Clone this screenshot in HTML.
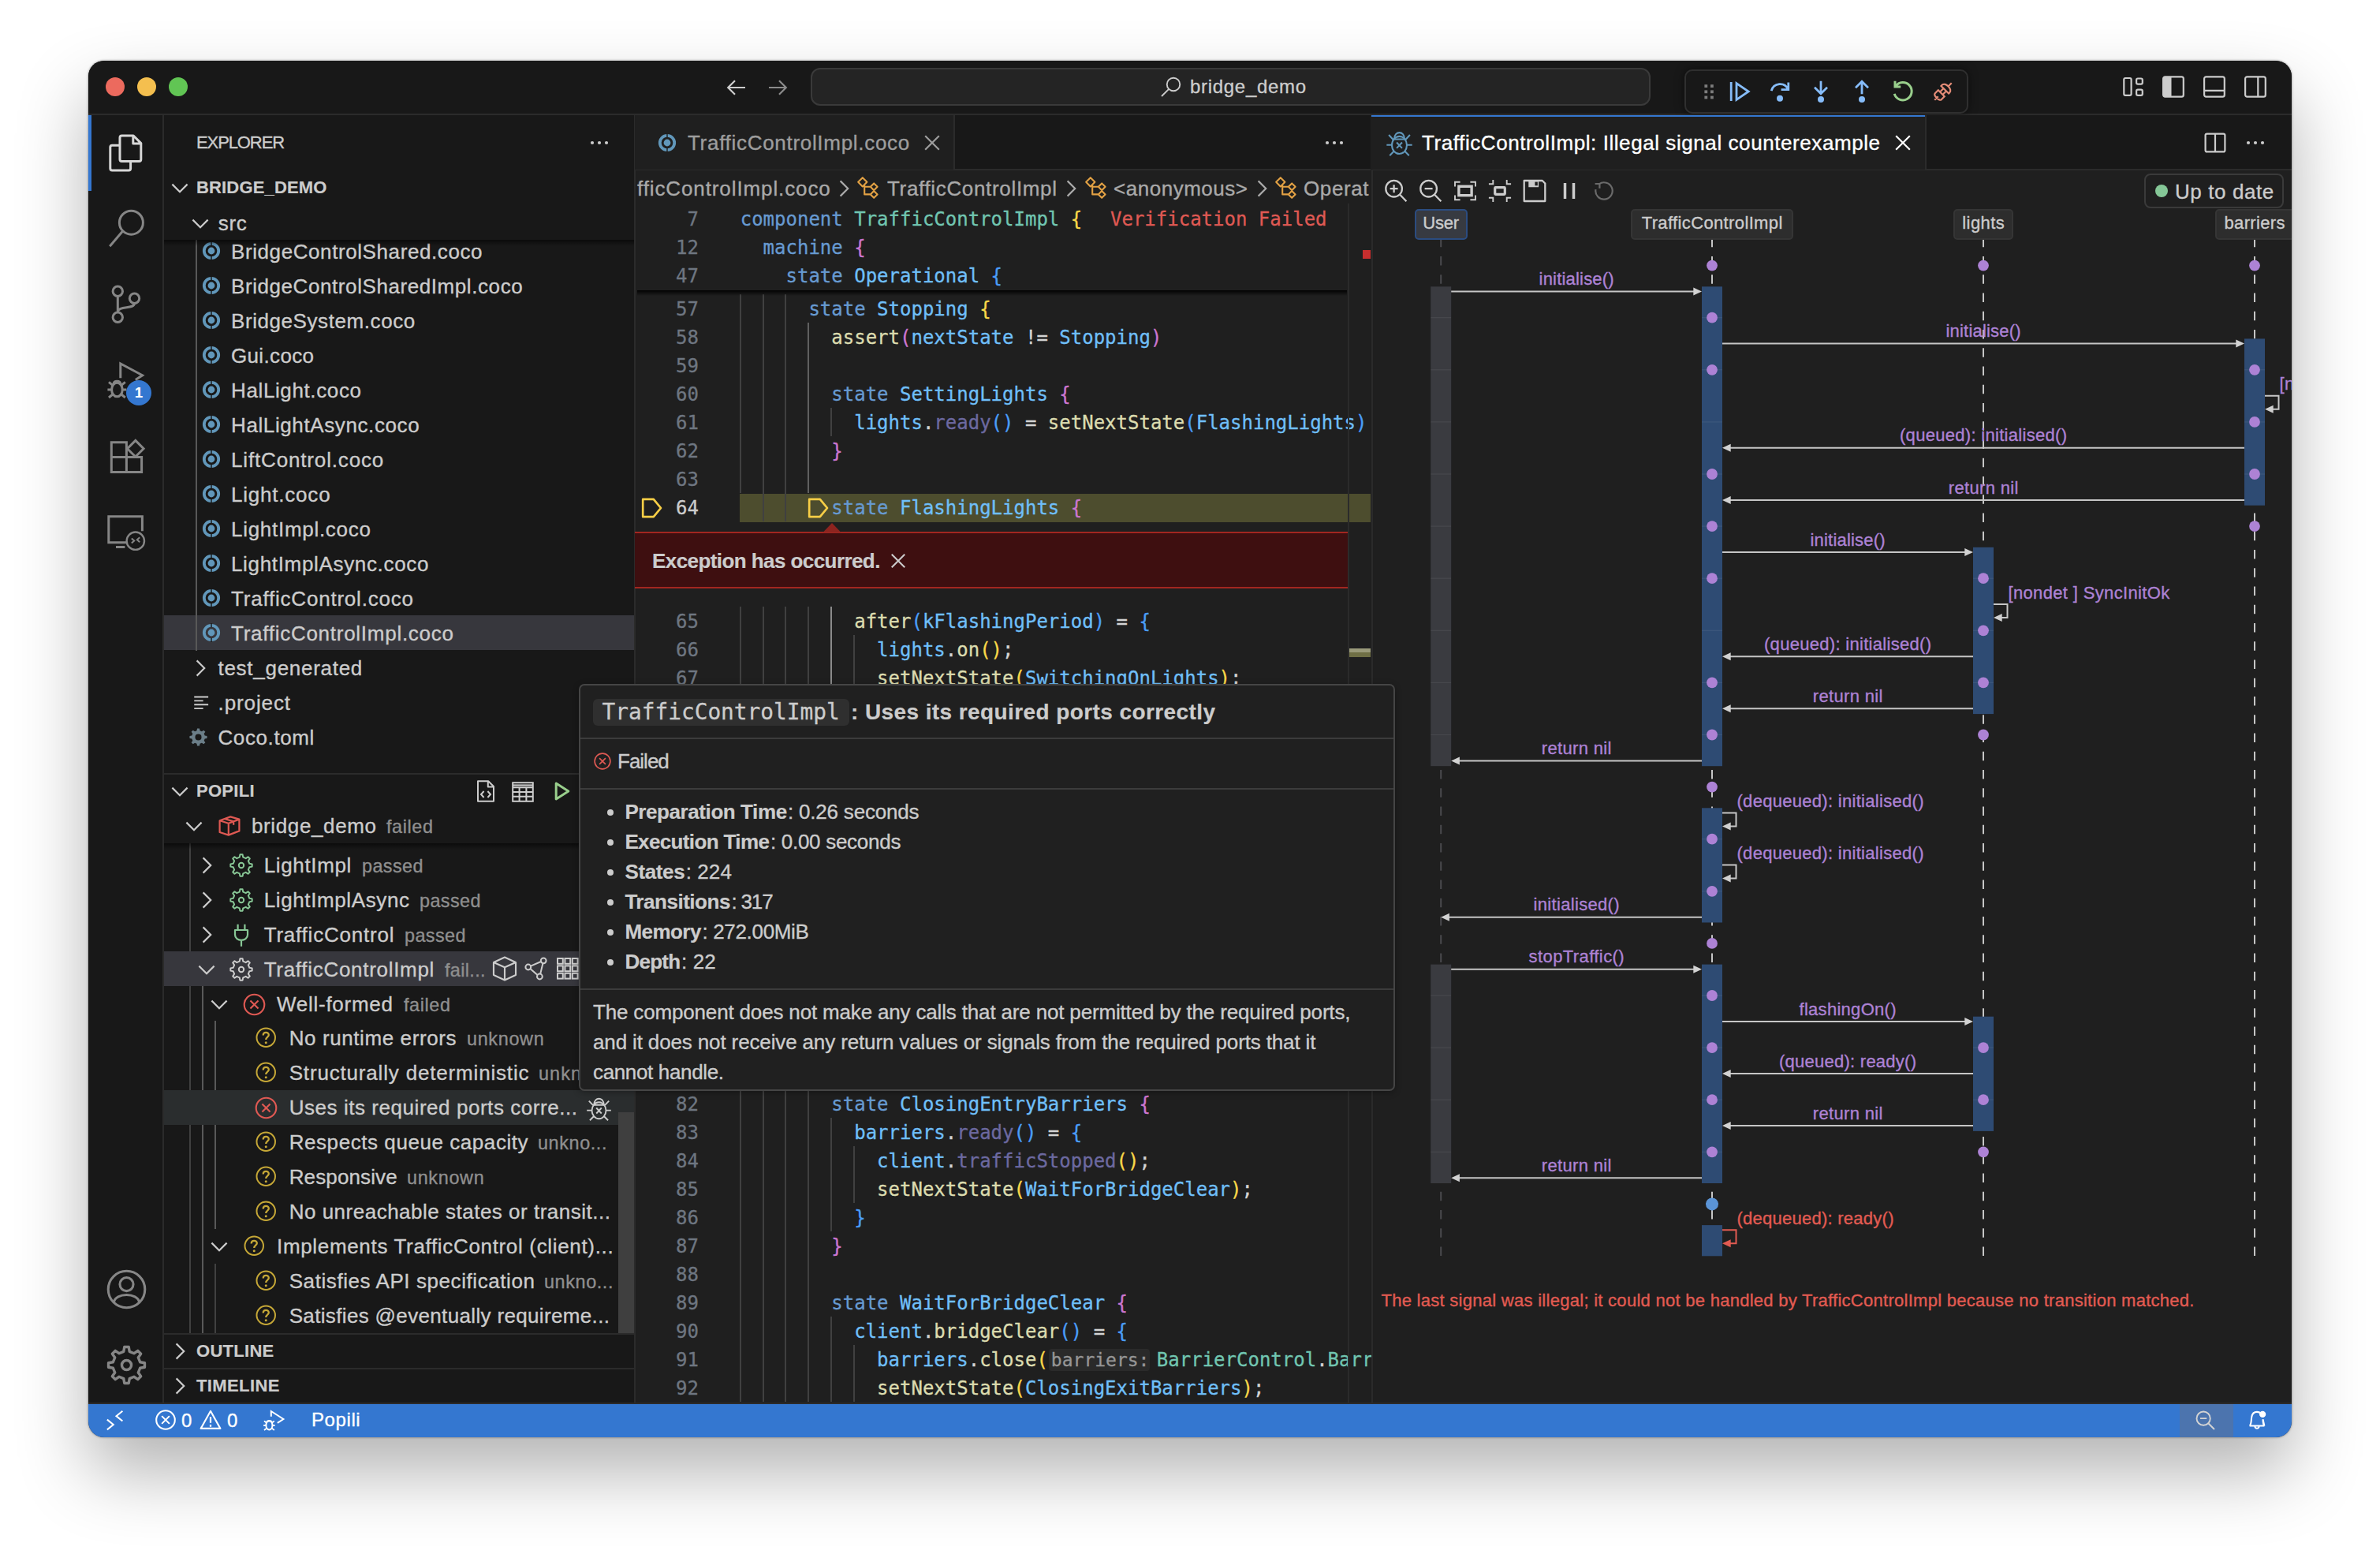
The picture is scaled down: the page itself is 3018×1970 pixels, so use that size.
<!DOCTYPE html><html><head><meta charset="utf-8"><title>bridge_demo</title><style>
html,body{margin:0;padding:0;background:#fff}
body{width:3018px;height:1970px;overflow:hidden;position:relative;font-family:"Liberation Sans",sans-serif}
#win{position:absolute;left:112px;top:77px;width:2794px;height:1745px;border-radius:20px;overflow:hidden;background:#1f1f1f}
#sh{position:absolute;left:112px;top:77px;width:2794px;height:1745px;border-radius:20px;box-shadow:0 44px 90px rgba(0,0,0,.3),0 0 3px rgba(0,0,0,.45)}
#in{position:absolute;left:-112px;top:-77px;width:3018px;height:1970px}
#in div,#in svg{position:absolute;}
#in div.r, #in span{position:static}
.u{white-space:pre;font-family:"Liberation Sans",sans-serif;-webkit-text-stroke:0.35px}
.m{white-space:pre;font-family:"DejaVu Sans Mono","Liberation Mono",monospace;-webkit-text-stroke:0.3px}
svg{overflow:visible}
</style></head><body><div id="sh"></div><div id="win"><div id="in"><div style="left:112px;top:76px;width:2794px;height:70px;background:#181818"></div><div style="left:112px;top:144px;width:2794px;height:2px;background:#2b2b2b"></div><div style="left:134px;top:98px;width:24px;height:24px;background:#ec6a5e;border-radius:50%"></div><div style="left:174px;top:98px;width:24px;height:24px;background:#f4bf4f;border-radius:50%"></div><div style="left:214px;top:98px;width:24px;height:24px;background:#61c554;border-radius:50%"></div><svg style="left:918.0px;top:95.0px;" width="32" height="32" viewBox="0 0 16 16"><path d="M13.5 8 H2.8 M7 3.6 L2.6 8 L7 12.4" fill="none" stroke="#cccccc" stroke-width="1.1"/></svg><svg style="left:970.0px;top:95.0px;" width="32" height="32" viewBox="0 0 16 16"><path d="M2.5 8 H13.2 M9 3.6 L13.4 8 L9 12.4" fill="none" stroke="#8a8a8a" stroke-width="1.1"/></svg><div style="left:1028px;top:86px;width:1065px;height:48px;background:#242424;border:2px solid #3a3a3a;border-radius:12px;box-sizing:border-box"></div><svg style="left:1470.0px;top:95.0px;" width="30" height="30" viewBox="0 0 16 16"><circle cx="9.6" cy="6.4" r="4.4" fill="none" stroke="#cccccc" stroke-width="1.0"/><path d="M6.5 9.5 L1.6 14.4" fill="none" stroke="#cccccc" stroke-width="1.0"/></svg><div class="u" style="left:1509px;top:86px;height:48px;line-height:48px;font-size:24px;color:#cccccc;font-weight:400;letter-spacing:0.7px;">bridge_demo</div><div style="left:2136px;top:88px;width:360px;height:56px;background:#181818;border:2px solid #2f2f2f;border-radius:10px;box-sizing:border-box;box-shadow:0 0 12px rgba(0,0,0,.5)"></div><svg style="left:2689.0px;top:94.0px;" width="32" height="32" viewBox="0 0 16 16"><rect x="2.15" y="2.5" width="4.65" height="10.9" rx="0.9" fill="none" stroke="#cccccc" stroke-width="1.1"/><rect x="10.05" y="2.75" width="3.85" height="3.55" rx="0.9" fill="none" stroke="#cccccc" stroke-width="1.1"/><rect x="10.05" y="9.85" width="3.85" height="3.55" rx="0.9" fill="none" stroke="#cccccc" stroke-width="1.1"/></svg><svg style="left:2740.0px;top:94.0px;" width="32" height="32" viewBox="0 0 16 16"><rect x="1.55" y="1.7" width="12.85" height="12.6" rx="1.2" fill="none" stroke="#cccccc" stroke-width="1.1"/><path d="M2.2 1.9 H6.75 V14.1 H2.2 Q1.7 14.1 1.7 13.4 V2.6 Q1.7 1.9 2.2 1.9 Z" fill="#cccccc"/></svg><svg style="left:2792.0px;top:94.0px;" width="32" height="32" viewBox="0 0 16 16"><rect x="1.55" y="1.7" width="12.85" height="12.6" rx="1.2" fill="none" stroke="#cccccc" stroke-width="1.1"/><path d="M1.8 10.4 H14.2" fill="none" stroke="#cccccc" stroke-width="1.1"/></svg><svg style="left:2844.0px;top:94.0px;" width="32" height="32" viewBox="0 0 16 16"><rect x="1.55" y="1.7" width="12.85" height="12.6" rx="1.2" fill="none" stroke="#cccccc" stroke-width="1.1"/><path d="M9.65 1.9 V14.1" fill="none" stroke="#cccccc" stroke-width="1.1"/></svg><div style="left:112px;top:146px;width:96px;height:1634px;background:#181818"></div><div style="left:206px;top:146px;width:2px;height:1634px;background:#2b2b2b"></div><div style="left:112px;top:146px;width:4px;height:96px;background:#3477d0"></div><svg style="left:136.0px;top:170.0px;" width="48" height="48" viewBox="0 0 24 24"><path d="M9.2 1 H16.6 L21.4 5.8 V16 Q21.4 17.2 20.2 17.2 H9.2 Q8 17.2 8 16 V2.2 Q8 1 9.2 1 Z M16.4 1.2 V6 H21.2" fill="none" stroke="#d7d7d7" stroke-width="1.5" stroke-linejoin="round"/><path d="M7.8 7.1 H3.1 Q1.9 7.1 1.9 8.3 V21.8 Q1.9 23 3.1 23 H13.6 Q14.8 23 14.8 21.8 V17.4" fill="none" stroke="#d7d7d7" stroke-width="1.5" stroke-linejoin="round"/></svg><svg style="left:136.0px;top:266.0px;" width="48" height="48" viewBox="0 0 24 24"><circle cx="15.2" cy="8.1" r="7.5" fill="none" stroke="#868686" stroke-width="1.5"/><path d="M9.9 13.4 L1.6 23.1" fill="none" stroke="#868686" stroke-width="1.5"/></svg><svg style="left:136.0px;top:362.0px;" width="48" height="48" viewBox="0 0 24 24"><circle cx="6.65" cy="3.6" r="3.1" fill="none" stroke="#868686" stroke-width="1.5"/><circle cx="6.65" cy="20.15" r="3.1" fill="none" stroke="#868686" stroke-width="1.5"/><circle cx="17.25" cy="8.15" r="3.1" fill="none" stroke="#868686" stroke-width="1.5"/><path d="M6.65 6.7 V17.05 M17.25 11.25 C17.25 15.2 6.65 12.4 6.65 17" fill="none" stroke="#868686" stroke-width="1.5"/></svg><svg style="left:136.0px;top:458.0px;" width="48" height="48" viewBox="0 0 24 24"><path d="M8.4 10.6 V1.5 L22.3 8.9 L17.9 11.7" fill="none" stroke="#868686" stroke-width="1.5" stroke-linejoin="miter"/><g transform="translate(0 0.8)"><ellipse cx="6.2" cy="17.2" rx="3.4" ry="4.4" fill="none" stroke="#868686" stroke-width="1.5"/><path d="M3.9 13.9 C4.2 11.2 8.2 11.2 8.5 13.9 M2.8 17.2 H0.2 M9.6 17.2 H12.2 M3.4 14.4 L1 12.4 M9 14.4 L11.4 12.4 M3.4 20.2 L1 22.2 M9 20.2 L11.4 22.2" fill="none" stroke="#868686" stroke-width="1.5"/></g></svg><div style="left:160px;top:482px;width:32px;height:32px;background:#3477d0;border-radius:50%"></div><div class="u" style="left:160px;top:480px;height:36px;line-height:36px;font-size:18px;color:#fff;font-weight:700;letter-spacing:0.0px;-webkit-text-stroke:0.2px;width:32px;text-align:center">1</div><svg style="left:136.0px;top:554.0px;" width="48" height="48" viewBox="0 0 24 24"><path d="M2.65 3.35 H12.2 V12.8 H21.8 V22.2 H2.65 Z M2.65 12.8 H12.2 V22.2" fill="none" stroke="#868686" stroke-width="1.5"/><path d="M17.9 2.2 L23.05 7.35 L17.9 12.5 L12.75 7.35 Z" fill="none" stroke="#868686" stroke-width="1.5"/></svg><svg style="left:136.0px;top:652.0px;" width="48" height="48" viewBox="0 0 24 24"><path d="M12 17.9 H0.9 V1.4 H22.2 V10.6 M5.5 20.75 H11.2" fill="none" stroke="#868686" stroke-width="1.5"/><circle cx="17.9" cy="16.85" r="5.6" fill="none" stroke="#868686" stroke-width="1.2"/><path d="M15.4 15.2 L17.1 16.7 L15.4 18.2 M20.6 14.6 L18.9 16.1 L20.6 17.6" fill="none" stroke="#868686" stroke-width="1.0"/></svg><svg style="left:131.5px;top:1605.5px;" width="57" height="57" viewBox="0 0 24 24"><circle cx="12" cy="12" r="9.8" fill="none" stroke="#868686" stroke-width="1.3"/><circle cx="12" cy="9.3" r="3.6" fill="none" stroke="#868686" stroke-width="1.3"/><path d="M5.2 18.9 C6 13.6 18 13.6 18.8 18.9" fill="none" stroke="#868686" stroke-width="1.3"/></svg><svg style="left:132.5px;top:1702.5px;" width="55" height="55" viewBox="0 0 24 24"><path d="M10.38 4.49 L10.82 1.99 L13.18 1.99 L13.62 4.49 L16.17 5.55 L18.24 4.08 L19.92 5.76 L18.45 7.83 L19.51 10.38 L22.01 10.82 L22.01 13.18 L19.51 13.62 L18.45 16.17 L19.92 18.24 L18.24 19.92 L16.17 18.45 L13.62 19.51 L13.18 22.01 L10.82 22.01 L10.38 19.51 L7.83 18.45 L5.76 19.92 L4.08 18.24 L5.55 16.17 L4.49 13.62 L1.99 13.18 L1.99 10.82 L4.49 10.38 L5.55 7.83 L4.08 5.76 L5.76 4.08 L7.83 5.55 Z" fill="none" stroke="#868686" stroke-width="1.5" stroke-linejoin="round"/><circle cx="12.0" cy="12.0" r="2.64" fill="none" stroke="#868686" stroke-width="1.5"/></svg><div style="left:112px;top:1779.7px;width:2794px;height:43px;background:#3477d0"></div><svg style="left:131.0px;top:1785.0px;" width="30" height="30" viewBox="0 0 16 16"><path d="M2.6 7.8 L6.8 11.2 L2.6 14.6 M13 2 L8.8 5.4 L13 8.8" fill="none" stroke="#ffffff" stroke-width="1.1"/></svg><svg style="left:195.0px;top:1785.0px;" width="30" height="30" viewBox="0 0 16 16"><circle cx="8" cy="8" r="6.3" fill="none" stroke="#ffffff" stroke-width="1.1"/><path d="M5.4 5.4 L10.6 10.6 M10.6 5.4 L5.4 10.6" fill="none" stroke="#ffffff" stroke-width="1.1"/></svg><div class="u" style="left:230px;top:1777px;height:48px;line-height:48px;font-size:24px;color:#ffffff;font-weight:400;letter-spacing:0px;">0</div><svg style="left:252.0px;top:1785.0px;" width="30" height="30" viewBox="0 0 16 16"><path d="M8 2 L14.6 13.8 H1.4 Z" fill="none" stroke="#ffffff" stroke-width="1.1" stroke-linejoin="round"/><path d="M8 6 V10 M8 11.2 V12.6" fill="none" stroke="#ffffff" stroke-width="1.2"/></svg><div class="u" style="left:288px;top:1777px;height:48px;line-height:48px;font-size:24px;color:#ffffff;font-weight:400;letter-spacing:0.0px;">0</div><svg style="left:331.0px;top:1785.0px;" width="32" height="32" viewBox="0 0 16 16"><path d="M6.4 5.4 V2 L14.2 7 L10.4 9.4" fill="none" stroke="#ffffff" stroke-width="1.0"/><ellipse cx="5.2" cy="11" rx="2" ry="2.7" fill="none" stroke="#ffffff" stroke-width="1.0"/><path d="M3.6 9 C3.8 7.6 6.6 7.6 6.8 9 M3.2 11 H1.6 M7.2 11 H8.8 M3.5 9.4 L2 8.2 M6.9 9.4 L8.4 8.2 M3.5 12.8 L2 14 M6.9 12.8 L8.4 14" fill="none" stroke="#ffffff" stroke-width="0.9"/></svg><div class="u" style="left:395px;top:1776px;height:48px;line-height:48px;font-size:24px;color:#ffffff;font-weight:400;letter-spacing:0.6px;">Popili</div><div style="left:2764px;top:1780px;width:68px;height:42px;background:#4c74ae"></div><svg style="left:2781.0px;top:1785.0px;" width="30" height="30" viewBox="0 0 16 16"><circle cx="7" cy="7" r="4.6" fill="none" stroke="#d4d4d4" stroke-width="1.0"/><path d="M10.4 10.4 L14.4 14.4 M4.8 7 H9.2" fill="none" stroke="#d4d4d4" stroke-width="1.0"/></svg><svg style="left:2847.0px;top:1785.0px;" width="30" height="30" viewBox="0 0 16 16"><path d="M3 12 C4.4 10.6 4 8 4.4 6 C4.8 3.6 6.4 2.6 8 2.6 C9.2 2.6 10 3 10.6 3.6 M12 7.6 C12 9.6 12 10.8 13 12 Z M3 12 H13 M6.6 12.4 C6.8 14.2 9.2 14.2 9.4 12.4" fill="none" stroke="#ffffff" stroke-width="1.1"/><circle cx="11.8" cy="4.2" r="2.2" fill="#ffffff"/></svg><svg style="left:2151.0px;top:100.0px;" width="32" height="32" viewBox="0 0 16 16"><rect x="5.2" y="3.6" width="1.9" height="1.9" fill="#7c7c7c"/><rect x="5.2" y="7.2" width="1.9" height="1.9" fill="#7c7c7c"/><rect x="5.2" y="10.8" width="1.9" height="1.9" fill="#7c7c7c"/><rect x="9.0" y="3.6" width="1.9" height="1.9" fill="#7c7c7c"/><rect x="9.0" y="7.2" width="1.9" height="1.9" fill="#7c7c7c"/><rect x="9.0" y="10.8" width="1.9" height="1.9" fill="#7c7c7c"/></svg><svg style="left:2190.0px;top:100.0px;" width="32" height="32" viewBox="0 0 16 16"><path d="M2.6 2 V14" fill="none" stroke="#86bcf9" stroke-width="1.4"/><path d="M6 2.8 L13.6 8 L6 13.2 Z" fill="none" stroke="#86bcf9" stroke-width="1.4" stroke-linejoin="miter"/></svg><svg style="left:2241.0px;top:100.0px;" width="32" height="32" viewBox="0 0 16 16"><path d="M2.6 7.6 C4 2.4 11 1.8 13.2 6.6 M13.4 2.2 V6.8 H8.8" fill="none" stroke="#86bcf9" stroke-width="1.4"/><circle cx="8" cy="12.4" r="2" fill="#86bcf9"/></svg><svg style="left:2293.0px;top:100.0px;" width="32" height="32" viewBox="0 0 16 16"><path d="M8 1.4 V9 M4 5.4 L8 9.4 L12 5.4" fill="none" stroke="#86bcf9" stroke-width="1.4"/><circle cx="8" cy="13" r="2" fill="#86bcf9"/></svg><svg style="left:2345.0px;top:100.0px;" width="32" height="32" viewBox="0 0 16 16"><path d="M8 9.6 V2 M4 5.6 L8 1.6 L12 5.6" fill="none" stroke="#86bcf9" stroke-width="1.4"/><circle cx="8" cy="13" r="2" fill="#86bcf9"/></svg><svg style="left:2397.0px;top:100.0px;" width="32" height="32" viewBox="0 0 16 16"><path d="M3.4 4.6 A5.6 5.6 0 1 1 2.6 9.4 M3 1.4 V5 H6.6" fill="none" stroke="#99cf8c" stroke-width="1.5"/></svg><svg style="left:2448.0px;top:100.0px;" width="32" height="32" viewBox="0 0 16 16"><g transform="rotate(-45 8 8)"><path d="M0.4 8 H3.6 M12.4 8 H15.6 M3.6 5.2 H6.4 V10.8 H3.6 C1.8 10.8 1.8 5.2 3.6 5.2 Z M9.6 4.6 H10.4 C13.4 4.6 13.4 11.4 10.4 11.4 H9.6 Z M6.4 6.8 H9.6 M6.4 9.2 H9.6" fill="none" stroke="#e58c77" stroke-width="1.1"/></g></svg><div style="left:208px;top:146px;width:597px;height:1634px;background:#181818"></div><div style="left:804px;top:146px;width:2px;height:1634px;background:#2b2b2b"></div><div style="left:208px;top:780px;width:596px;height:44px;background:#37373d"></div><div style="left:248px;top:304px;width:2px;height:521px;background:#585858"></div><svg style="left:252.0px;top:301.5px;" width="32" height="32" viewBox="0 0 16 16"><circle cx="8" cy="8" r="4.6" fill="none" stroke="#6197ba" stroke-width="1.9"/><circle cx="8" cy="8" r="2.2" fill="#6197ba"/><path d="M8 2 V4.6 M8 11.4 V14" stroke="#181818" stroke-width="0.7"/></svg><div class="u" style="left:293px;top:293px;height:52px;line-height:52px;font-size:26px;color:#cccccc;font-weight:400;letter-spacing:0.588px;">BridgeControlShared.coco</div><svg style="left:252.0px;top:345.5px;" width="32" height="32" viewBox="0 0 16 16"><circle cx="8" cy="8" r="4.6" fill="none" stroke="#6197ba" stroke-width="1.9"/><circle cx="8" cy="8" r="2.2" fill="#6197ba"/><path d="M8 2 V4.6 M8 11.4 V14" stroke="#181818" stroke-width="0.7"/></svg><div class="u" style="left:293px;top:337px;height:52px;line-height:52px;font-size:26px;color:#cccccc;font-weight:400;letter-spacing:0.578px;">BridgeControlSharedImpl.coco</div><svg style="left:252.0px;top:389.5px;" width="32" height="32" viewBox="0 0 16 16"><circle cx="8" cy="8" r="4.6" fill="none" stroke="#6197ba" stroke-width="1.9"/><circle cx="8" cy="8" r="2.2" fill="#6197ba"/><path d="M8 2 V4.6 M8 11.4 V14" stroke="#181818" stroke-width="0.7"/></svg><div class="u" style="left:293px;top:381px;height:52px;line-height:52px;font-size:26px;color:#cccccc;font-weight:400;letter-spacing:0.576px;">BridgeSystem.coco</div><svg style="left:252.0px;top:433.5px;" width="32" height="32" viewBox="0 0 16 16"><circle cx="8" cy="8" r="4.6" fill="none" stroke="#6197ba" stroke-width="1.9"/><circle cx="8" cy="8" r="2.2" fill="#6197ba"/><path d="M8 2 V4.6 M8 11.4 V14" stroke="#181818" stroke-width="0.7"/></svg><div class="u" style="left:293px;top:425px;height:52px;line-height:52px;font-size:26px;color:#cccccc;font-weight:400;letter-spacing:0.342px;">Gui.coco</div><svg style="left:252.0px;top:477.5px;" width="32" height="32" viewBox="0 0 16 16"><circle cx="8" cy="8" r="4.6" fill="none" stroke="#6197ba" stroke-width="1.9"/><circle cx="8" cy="8" r="2.2" fill="#6197ba"/><path d="M8 2 V4.6 M8 11.4 V14" stroke="#181818" stroke-width="0.7"/></svg><div class="u" style="left:293px;top:469px;height:52px;line-height:52px;font-size:26px;color:#cccccc;font-weight:400;letter-spacing:0.622px;">HalLight.coco</div><svg style="left:252.0px;top:521.5px;" width="32" height="32" viewBox="0 0 16 16"><circle cx="8" cy="8" r="4.6" fill="none" stroke="#6197ba" stroke-width="1.9"/><circle cx="8" cy="8" r="2.2" fill="#6197ba"/><path d="M8 2 V4.6 M8 11.4 V14" stroke="#181818" stroke-width="0.7"/></svg><div class="u" style="left:293px;top:513px;height:52px;line-height:52px;font-size:26px;color:#cccccc;font-weight:400;letter-spacing:0.609px;">HalLightAsync.coco</div><svg style="left:252.0px;top:565.5px;" width="32" height="32" viewBox="0 0 16 16"><circle cx="8" cy="8" r="4.6" fill="none" stroke="#6197ba" stroke-width="1.9"/><circle cx="8" cy="8" r="2.2" fill="#6197ba"/><path d="M8 2 V4.6 M8 11.4 V14" stroke="#181818" stroke-width="0.7"/></svg><div class="u" style="left:293px;top:557px;height:52px;line-height:52px;font-size:26px;color:#cccccc;font-weight:400;letter-spacing:0.844px;">LiftControl.coco</div><svg style="left:252.0px;top:609.5px;" width="32" height="32" viewBox="0 0 16 16"><circle cx="8" cy="8" r="4.6" fill="none" stroke="#6197ba" stroke-width="1.9"/><circle cx="8" cy="8" r="2.2" fill="#6197ba"/><path d="M8 2 V4.6 M8 11.4 V14" stroke="#181818" stroke-width="0.7"/></svg><div class="u" style="left:293px;top:601px;height:52px;line-height:52px;font-size:26px;color:#cccccc;font-weight:400;letter-spacing:0.786px;">Light.coco</div><svg style="left:252.0px;top:653.5px;" width="32" height="32" viewBox="0 0 16 16"><circle cx="8" cy="8" r="4.6" fill="none" stroke="#6197ba" stroke-width="1.9"/><circle cx="8" cy="8" r="2.2" fill="#6197ba"/><path d="M8 2 V4.6 M8 11.4 V14" stroke="#181818" stroke-width="0.7"/></svg><div class="u" style="left:293px;top:645px;height:52px;line-height:52px;font-size:26px;color:#cccccc;font-weight:400;letter-spacing:0.712px;">LightImpl.coco</div><svg style="left:252.0px;top:697.5px;" width="32" height="32" viewBox="0 0 16 16"><circle cx="8" cy="8" r="4.6" fill="none" stroke="#6197ba" stroke-width="1.9"/><circle cx="8" cy="8" r="2.2" fill="#6197ba"/><path d="M8 2 V4.6 M8 11.4 V14" stroke="#181818" stroke-width="0.7"/></svg><div class="u" style="left:293px;top:689px;height:52px;line-height:52px;font-size:26px;color:#cccccc;font-weight:400;letter-spacing:0.664px;">LightImplAsync.coco</div><svg style="left:252.0px;top:741.5px;" width="32" height="32" viewBox="0 0 16 16"><circle cx="8" cy="8" r="4.6" fill="none" stroke="#6197ba" stroke-width="1.9"/><circle cx="8" cy="8" r="2.2" fill="#6197ba"/><path d="M8 2 V4.6 M8 11.4 V14" stroke="#181818" stroke-width="0.7"/></svg><div class="u" style="left:293px;top:733px;height:52px;line-height:52px;font-size:26px;color:#cccccc;font-weight:400;letter-spacing:0.792px;">TrafficControl.coco</div><svg style="left:252.0px;top:785.5px;" width="32" height="32" viewBox="0 0 16 16"><circle cx="8" cy="8" r="4.6" fill="none" stroke="#6197ba" stroke-width="1.9"/><circle cx="8" cy="8" r="2.2" fill="#6197ba"/><path d="M8 2 V4.6 M8 11.4 V14" stroke="#181818" stroke-width="0.7"/></svg><div class="u" style="left:293px;top:777px;height:52px;line-height:52px;font-size:26px;color:#cccccc;font-weight:400;letter-spacing:0.733px;">TrafficControlImpl.coco</div><svg style="left:238.0px;top:831.0px;" width="32" height="32" viewBox="0 0 16 16"><path d="M5.8 3.2 L10.6 8 L5.8 12.8" fill="none" stroke="#cccccc" stroke-width="1.1"/></svg><div class="u" style="left:276.5px;top:821px;height:52px;line-height:52px;font-size:26px;color:#cccccc;font-weight:400;letter-spacing:0.717px;">test_generated</div><svg style="left:242.5px;top:877.0px;" width="26" height="26" viewBox="0 0 16 16"><path d="M2 4 H13 M2 7 H9 M2 10 H13 M2 13 H9" fill="none" stroke="#cccccc" stroke-width="1.2"/></svg><div class="u" style="left:276.5px;top:865px;height:52px;line-height:52px;font-size:26px;color:#cccccc;font-weight:400;letter-spacing:0.905px;">.project</div><svg style="left:238.0px;top:920.5px;" width="27" height="27" viewBox="0 0 16 16"><path d="M6.83 3.14 L7.12 1.46 L8.88 1.46 L9.17 3.14 L10.61 3.74 L12.00 2.75 L13.25 4.00 L12.26 5.39 L12.86 6.83 L14.54 7.12 L14.54 8.88 L12.86 9.17 L12.26 10.61 L13.25 12.00 L12.00 13.25 L10.61 12.26 L9.17 12.86 L8.88 14.54 L7.12 14.54 L6.83 12.86 L5.39 12.26 L4.00 13.25 L2.75 12.00 L3.74 10.61 L3.14 9.17 L1.46 8.88 L1.46 7.12 L3.14 6.83 L3.74 5.39 L2.75 4.00 L4.00 2.75 L5.39 3.74 Z M8 5.6 A2.4 2.4 0 1 0 8 10.4 A2.4 2.4 0 1 0 8 5.6 Z" fill="#6b7e88" fill-rule="evenodd"/></svg><div class="u" style="left:276.5px;top:909px;height:52px;line-height:52px;font-size:26px;color:#cccccc;font-weight:400;letter-spacing:0.595px;">Coco.toml</div><div style="left:208px;top:146px;width:596px;height:158px;background:#181818"></div><div style="left:208px;top:304px;width:596px;height:8px;background:linear-gradient(rgba(0,0,0,.55),rgba(0,0,0,0))"></div><div class="u" style="left:249px;top:159px;height:44px;line-height:44px;font-size:22px;color:#cccccc;font-weight:400;letter-spacing:-1.1px;">EXPLORER</div><svg style="left:744.0px;top:165.0px;" width="32" height="32" viewBox="0 0 16 16"><circle cx="3.5" cy="8" r="1.05" fill="#cccccc"/><circle cx="8" cy="8" r="1.05" fill="#cccccc"/><circle cx="12.5" cy="8" r="1.05" fill="#cccccc"/></svg><svg style="left:212.0px;top:222.0px;" width="32" height="32" viewBox="0 0 16 16"><path d="M3.2 5.8 L8 10.6 L12.8 5.8" fill="none" stroke="#cccccc" stroke-width="1.1"/></svg><div class="u" style="left:249px;top:216px;height:44px;line-height:44px;font-size:22px;color:#cccccc;font-weight:700;letter-spacing:0.16px;-webkit-text-stroke:0.2px;">BRIDGE_DEMO</div><svg style="left:238.0px;top:267.0px;" width="32" height="32" viewBox="0 0 16 16"><path d="M3.2 5.8 L8 10.6 L12.8 5.8" fill="none" stroke="#cccccc" stroke-width="1.1"/></svg><div class="u" style="left:276.8px;top:257px;height:52px;line-height:52px;font-size:26px;color:#cccccc;font-weight:400;letter-spacing:0.67px;">src</div><div style="left:208px;top:980px;width:596px;height:2px;background:#2b2b2b"></div><svg style="left:212.0px;top:987.0px;" width="32" height="32" viewBox="0 0 16 16"><path d="M3.2 5.8 L8 10.6 L12.8 5.8" fill="none" stroke="#cccccc" stroke-width="1.1"/></svg><div class="u" style="left:249px;top:981px;height:44px;line-height:44px;font-size:22px;color:#cccccc;font-weight:700;letter-spacing:0.28px;-webkit-text-stroke:0.2px;">POPILI</div><svg style="left:600.0px;top:987.0px;" width="32" height="32" viewBox="0 0 16 16"><path d="M3 1.6 H9.6 L13 5 V14.4 H3 Z M9.4 1.8 V5.2 H12.8" fill="none" stroke="#cccccc" stroke-width="1" stroke-linejoin="round"/><path d="M6.8 8 L5 10 L6.8 12 M9.2 8 L11 10 L9.2 12" fill="none" stroke="#cccccc" stroke-width="1"/></svg><svg style="left:647.0px;top:987.0px;" width="32" height="32" viewBox="0 0 16 16"><rect x="1.6" y="2.6" width="12.8" height="11.8" fill="none" stroke="#cccccc" stroke-width="1"/><path d="M1.6 5.6 H14.4 M1.6 8.5 H14.4 M1.6 11.4 H14.4 M5.8 5.6 V14.4 M10.2 5.6 V14.4" fill="none" stroke="#cccccc" stroke-width="1"/><path d="M1.6 4.2 H14.4" fill="none" stroke="#cccccc" stroke-width="1"/></svg><svg style="left:696.0px;top:987.0px;" width="32" height="32" viewBox="0 0 16 16"><path d="M4.6 3 L12.4 8 L4.6 13 Z" fill="none" stroke="#99cf8c" stroke-width="1.5" stroke-linejoin="round"/></svg><div style="left:240px;top:1069px;width:2px;height:622px;background:#404040"></div><div style="left:256px;top:1250px;width:2px;height:441px;background:#585858"></div><div style="left:272px;top:1294px;width:2px;height:264px;background:#585858"></div><div style="left:272px;top:1602px;width:2px;height:89px;background:#404040"></div><div style="left:208px;top:1206px;width:596px;height:44px;background:#37373d"></div><div style="left:208px;top:1382px;width:596px;height:44px;background:#2a2d2e"></div><svg style="left:246.0px;top:1081.0px;" width="32" height="32" viewBox="0 0 16 16"><path d="M5.8 3.2 L10.6 8 L5.8 12.8" fill="none" stroke="#cccccc" stroke-width="1.1"/></svg><svg style="left:290.0px;top:1081.0px;" width="32" height="32" viewBox="0 0 16 16"><path d="M6.89 2.84 L7.19 1.17 L8.81 1.17 L9.11 2.84 L10.86 3.56 L12.26 2.60 L13.40 3.74 L12.44 5.14 L13.16 6.89 L14.83 7.19 L14.83 8.81 L13.16 9.11 L12.44 10.86 L13.40 12.26 L12.26 13.40 L10.86 12.44 L9.11 13.16 L8.81 14.83 L7.19 14.83 L6.89 13.16 L5.14 12.44 L3.74 13.40 L2.60 12.26 L3.56 10.86 L2.84 9.11 L1.17 8.81 L1.17 7.19 L2.84 6.89 L3.56 5.14 L2.60 3.74 L3.74 2.60 L5.14 3.56 Z" fill="none" stroke="#88c796" stroke-width="1.0" stroke-linejoin="round"/><circle cx="8.0" cy="8.0" r="1.6" fill="none" stroke="#88c796" stroke-width="1.0"/></svg><div class="u" style="left:334.7px;top:1071px;height:52px;line-height:52px;font-size:26px;color:#cccccc;font-weight:400;letter-spacing:0.65px;">LightImpl</div><div class="u" style="left:459px;top:1074.6px;height:46.8px;line-height:46.8px;font-size:23.4px;color:#8f8f8f;font-weight:400;letter-spacing:0.408px;">passed</div><svg style="left:246.0px;top:1125.0px;" width="32" height="32" viewBox="0 0 16 16"><path d="M5.8 3.2 L10.6 8 L5.8 12.8" fill="none" stroke="#cccccc" stroke-width="1.1"/></svg><svg style="left:290.0px;top:1125.0px;" width="32" height="32" viewBox="0 0 16 16"><path d="M6.89 2.84 L7.19 1.17 L8.81 1.17 L9.11 2.84 L10.86 3.56 L12.26 2.60 L13.40 3.74 L12.44 5.14 L13.16 6.89 L14.83 7.19 L14.83 8.81 L13.16 9.11 L12.44 10.86 L13.40 12.26 L12.26 13.40 L10.86 12.44 L9.11 13.16 L8.81 14.83 L7.19 14.83 L6.89 13.16 L5.14 12.44 L3.74 13.40 L2.60 12.26 L3.56 10.86 L2.84 9.11 L1.17 8.81 L1.17 7.19 L2.84 6.89 L3.56 5.14 L2.60 3.74 L3.74 2.60 L5.14 3.56 Z" fill="none" stroke="#88c796" stroke-width="1.0" stroke-linejoin="round"/><circle cx="8.0" cy="8.0" r="1.6" fill="none" stroke="#88c796" stroke-width="1.0"/></svg><div class="u" style="left:334.7px;top:1115px;height:52px;line-height:52px;font-size:26px;color:#cccccc;font-weight:400;letter-spacing:0.615px;">LightImplAsync</div><div class="u" style="left:532px;top:1118.6px;height:46.8px;line-height:46.8px;font-size:23.4px;color:#8f8f8f;font-weight:400;letter-spacing:0.408px;">passed</div><svg style="left:246.0px;top:1169.0px;" width="32" height="32" viewBox="0 0 16 16"><path d="M5.8 3.2 L10.6 8 L5.8 12.8" fill="none" stroke="#cccccc" stroke-width="1.1"/></svg><svg style="left:290.0px;top:1169.0px;" width="32" height="32" viewBox="0 0 16 16"><path d="M5.8 1.4 V5 M10.2 1.4 V5 M4 5 H12 V8 C12 12.6 4 12.6 4 8 Z M8 11.6 V15.4" fill="none" stroke="#88c796" stroke-width="1.1" stroke-linejoin="round"/></svg><div class="u" style="left:334.7px;top:1159px;height:52px;line-height:52px;font-size:26px;color:#cccccc;font-weight:400;letter-spacing:0.784px;">TrafficControl</div><div class="u" style="left:513px;top:1162.6px;height:46.8px;line-height:46.8px;font-size:23.4px;color:#8f8f8f;font-weight:400;letter-spacing:0.408px;">passed</div><svg style="left:246.0px;top:1213.0px;" width="32" height="32" viewBox="0 0 16 16"><path d="M3.2 5.8 L8 10.6 L12.8 5.8" fill="none" stroke="#cccccc" stroke-width="1.1"/></svg><svg style="left:290.0px;top:1213.0px;" width="32" height="32" viewBox="0 0 16 16"><path d="M6.89 2.84 L7.19 1.17 L8.81 1.17 L9.11 2.84 L10.86 3.56 L12.26 2.60 L13.40 3.74 L12.44 5.14 L13.16 6.89 L14.83 7.19 L14.83 8.81 L13.16 9.11 L12.44 10.86 L13.40 12.26 L12.26 13.40 L10.86 12.44 L9.11 13.16 L8.81 14.83 L7.19 14.83 L6.89 13.16 L5.14 12.44 L3.74 13.40 L2.60 12.26 L3.56 10.86 L2.84 9.11 L1.17 8.81 L1.17 7.19 L2.84 6.89 L3.56 5.14 L2.60 3.74 L3.74 2.60 L5.14 3.56 Z" fill="none" stroke="#cccccc" stroke-width="1.0" stroke-linejoin="round"/><circle cx="8.0" cy="8.0" r="1.6" fill="none" stroke="#cccccc" stroke-width="1.0"/></svg><div class="u" style="left:334.7px;top:1203px;height:52px;line-height:52px;font-size:26px;color:#cccccc;font-weight:400;letter-spacing:0.704px;">TrafficControlImpl</div><div class="u" style="left:564px;top:1206.6px;height:46.8px;line-height:46.8px;font-size:23.4px;color:#8f8f8f;font-weight:400;letter-spacing:0.347px;">fail...</div><svg style="left:623.0px;top:1211.0px;" width="34" height="34" viewBox="0 0 16 16"><path d="M8 1.2 L14.6 4.2 V11.8 L8 14.8 L1.4 11.8 V4.2 Z M1.4 4.2 L8 7.2 L14.6 4.2 M8 7.2 V14.8" fill="none" stroke="#cccccc" stroke-width="1" stroke-linejoin="round"/></svg><svg style="left:664.0px;top:1212.0px;" width="32" height="32" viewBox="0 0 16 16"><circle cx="12.6" cy="2.9" r="1.7" fill="none" stroke="#cccccc" stroke-width="1"/><circle cx="2.9" cy="7" r="1.7" fill="none" stroke="#cccccc" stroke-width="1"/><circle cx="10.2" cy="13" r="1.7" fill="none" stroke="#cccccc" stroke-width="1"/><path d="M4.5 6.3 L11 3.5 M4.3 8.1 L8.8 12 M12.2 4.6 L10.6 11.3" fill="none" stroke="#cccccc" stroke-width="1"/></svg><svg style="left:704.0px;top:1212.0px;" width="32" height="32" viewBox="0 0 16 16"><rect x="1.5" y="1.5" width="3.4" height="3.4" fill="none" stroke="#cccccc" stroke-width="1"/><rect x="1.5" y="6.2" width="3.4" height="3.4" fill="none" stroke="#cccccc" stroke-width="1"/><rect x="1.5" y="10.9" width="3.4" height="3.4" fill="none" stroke="#cccccc" stroke-width="1"/><rect x="6.2" y="1.5" width="3.4" height="3.4" fill="none" stroke="#cccccc" stroke-width="1"/><rect x="6.2" y="6.2" width="3.4" height="3.4" fill="none" stroke="#cccccc" stroke-width="1"/><rect x="6.2" y="10.9" width="3.4" height="3.4" fill="none" stroke="#cccccc" stroke-width="1"/><rect x="10.9" y="1.5" width="3.4" height="3.4" fill="none" stroke="#cccccc" stroke-width="1"/><rect x="10.9" y="6.2" width="3.4" height="3.4" fill="none" stroke="#cccccc" stroke-width="1"/><rect x="10.9" y="10.9" width="3.4" height="3.4" fill="none" stroke="#cccccc" stroke-width="1"/></svg><svg style="left:262.0px;top:1257.0px;" width="32" height="32" viewBox="0 0 16 16"><path d="M3.2 5.8 L8 10.6 L12.8 5.8" fill="none" stroke="#cccccc" stroke-width="1.1"/></svg><svg style="left:306.5px;top:1257.5px;" width="31" height="31" viewBox="0 0 16 16"><circle cx="8" cy="8" r="6.6" fill="none" stroke="#df5953" stroke-width="1.1"/><path d="M5.4 5.4 L10.6 10.6 M10.6 5.4 L5.4 10.6" fill="none" stroke="#df5953" stroke-width="1.1"/></svg><div class="u" style="left:351px;top:1247px;height:52px;line-height:52px;font-size:26px;color:#cccccc;font-weight:400;letter-spacing:0.733px;">Well-formed</div><div class="u" style="left:512px;top:1250.6px;height:46.8px;line-height:46.8px;font-size:23.4px;color:#8f8f8f;font-weight:400;letter-spacing:0.612px;">failed</div><svg style="left:322.75px;top:1300.75px;" width="28.5" height="28.5" viewBox="0 0 16 16"><circle cx="8" cy="8" r="6.6" fill="none" stroke="#c6a837" stroke-width="1.1"/><path d="M6 6.4 C6 3.8 10 3.8 10 6.2 C10 7.8 8 7.6 8 9.6" fill="none" stroke="#c6a837" stroke-width="1.3"/><circle cx="8" cy="11.6" r="0.85" fill="#c6a837"/></svg><div class="u" style="left:366.7px;top:1290px;height:52px;line-height:52px;font-size:26px;color:#cccccc;font-weight:400;letter-spacing:0.595px;">No runtime errors</div><div class="u" style="left:592px;top:1293.6px;height:46.8px;line-height:46.8px;font-size:23.4px;color:#8f8f8f;font-weight:400;letter-spacing:0.671px;">unknown</div><svg style="left:322.75px;top:1344.75px;" width="28.5" height="28.5" viewBox="0 0 16 16"><circle cx="8" cy="8" r="6.6" fill="none" stroke="#c6a837" stroke-width="1.1"/><path d="M6 6.4 C6 3.8 10 3.8 10 6.2 C10 7.8 8 7.6 8 9.6" fill="none" stroke="#c6a837" stroke-width="1.3"/><circle cx="8" cy="11.6" r="0.85" fill="#c6a837"/></svg><div class="u" style="left:366.7px;top:1334px;height:52px;line-height:52px;font-size:26px;color:#cccccc;font-weight:400;letter-spacing:0.824px;">Structurally deterministic</div><div class="u" style="left:683px;top:1337.6px;height:46.8px;line-height:46.8px;font-size:23.4px;color:#8f8f8f;font-weight:400;letter-spacing:1.061px;">unkno</div><svg style="left:321.5px;top:1388.5px;" width="31" height="31" viewBox="0 0 16 16"><circle cx="8" cy="8" r="6.6" fill="none" stroke="#df5953" stroke-width="1.1"/><path d="M5.4 5.4 L10.6 10.6 M10.6 5.4 L5.4 10.6" fill="none" stroke="#df5953" stroke-width="1.1"/></svg><div class="u" style="left:366.7px;top:1378px;height:52px;line-height:52px;font-size:26px;color:#cccccc;font-weight:400;letter-spacing:0.55px;">Uses its required ports corre...</div><svg style="left:741.5px;top:1386.5px;" width="35" height="35" viewBox="0 0 16 16"><ellipse cx="8" cy="9.5" rx="4.1" ry="4.8" fill="none" stroke="#cccccc" stroke-width="0.85"/><path d="M5.2 6.1 C5.2 1.5 10.8 1.5 10.8 6.1 M4.6 6.3 H11.4 M3.9 9.4 H1 M12.1 9.4 H15 M4.6 6.5 L2.2 3.9 M11.4 6.5 L13.8 3.9 M5.1 12.8 L2.7 15.2 M10.9 12.8 L13.3 15.2 M6.5 8 L9.5 11.2 M9.5 8 L6.5 11.2" fill="none" stroke="#cccccc" stroke-width="0.85"/></svg><svg style="left:322.75px;top:1432.75px;" width="28.5" height="28.5" viewBox="0 0 16 16"><circle cx="8" cy="8" r="6.6" fill="none" stroke="#c6a837" stroke-width="1.1"/><path d="M6 6.4 C6 3.8 10 3.8 10 6.2 C10 7.8 8 7.6 8 9.6" fill="none" stroke="#c6a837" stroke-width="1.3"/><circle cx="8" cy="11.6" r="0.85" fill="#c6a837"/></svg><div class="u" style="left:366.7px;top:1422px;height:52px;line-height:52px;font-size:26px;color:#cccccc;font-weight:400;letter-spacing:0.563px;">Respects queue capacity</div><div class="u" style="left:682px;top:1425.6px;height:46.8px;line-height:46.8px;font-size:23.4px;color:#8f8f8f;font-weight:400;letter-spacing:0.606px;">unkno...</div><svg style="left:322.75px;top:1476.75px;" width="28.5" height="28.5" viewBox="0 0 16 16"><circle cx="8" cy="8" r="6.6" fill="none" stroke="#c6a837" stroke-width="1.1"/><path d="M6 6.4 C6 3.8 10 3.8 10 6.2 C10 7.8 8 7.6 8 9.6" fill="none" stroke="#c6a837" stroke-width="1.3"/><circle cx="8" cy="11.6" r="0.85" fill="#c6a837"/></svg><div class="u" style="left:366.7px;top:1466px;height:52px;line-height:52px;font-size:26px;color:#cccccc;font-weight:400;letter-spacing:0.127px;">Responsive</div><div class="u" style="left:516px;top:1469.6px;height:46.8px;line-height:46.8px;font-size:23.4px;color:#8f8f8f;font-weight:400;letter-spacing:0.671px;">unknown</div><svg style="left:322.75px;top:1520.75px;" width="28.5" height="28.5" viewBox="0 0 16 16"><circle cx="8" cy="8" r="6.6" fill="none" stroke="#c6a837" stroke-width="1.1"/><path d="M6 6.4 C6 3.8 10 3.8 10 6.2 C10 7.8 8 7.6 8 9.6" fill="none" stroke="#c6a837" stroke-width="1.3"/><circle cx="8" cy="11.6" r="0.85" fill="#c6a837"/></svg><div class="u" style="left:366.7px;top:1510px;height:52px;line-height:52px;font-size:26px;color:#cccccc;font-weight:400;letter-spacing:0.5px;">No unreachable states or transit...</div><svg style="left:262.0px;top:1564.0px;" width="32" height="32" viewBox="0 0 16 16"><path d="M3.2 5.8 L8 10.6 L12.8 5.8" fill="none" stroke="#cccccc" stroke-width="1.1"/></svg><svg style="left:307.75px;top:1564.75px;" width="28.5" height="28.5" viewBox="0 0 16 16"><circle cx="8" cy="8" r="6.6" fill="none" stroke="#c6a837" stroke-width="1.1"/><path d="M6 6.4 C6 3.8 10 3.8 10 6.2 C10 7.8 8 7.6 8 9.6" fill="none" stroke="#c6a837" stroke-width="1.3"/><circle cx="8" cy="11.6" r="0.85" fill="#c6a837"/></svg><div class="u" style="left:351px;top:1554px;height:52px;line-height:52px;font-size:26px;color:#cccccc;font-weight:400;letter-spacing:0.668px;">Implements TrafficControl (client)...</div><svg style="left:322.75px;top:1608.75px;" width="28.5" height="28.5" viewBox="0 0 16 16"><circle cx="8" cy="8" r="6.6" fill="none" stroke="#c6a837" stroke-width="1.1"/><path d="M6 6.4 C6 3.8 10 3.8 10 6.2 C10 7.8 8 7.6 8 9.6" fill="none" stroke="#c6a837" stroke-width="1.3"/><circle cx="8" cy="11.6" r="0.85" fill="#c6a837"/></svg><div class="u" style="left:366.7px;top:1598px;height:52px;line-height:52px;font-size:26px;color:#cccccc;font-weight:400;letter-spacing:0.578px;">Satisfies API specification</div><div class="u" style="left:690px;top:1601.6px;height:46.8px;line-height:46.8px;font-size:23.4px;color:#8f8f8f;font-weight:400;letter-spacing:0.606px;">unkno...</div><svg style="left:322.75px;top:1652.75px;" width="28.5" height="28.5" viewBox="0 0 16 16"><circle cx="8" cy="8" r="6.6" fill="none" stroke="#c6a837" stroke-width="1.1"/><path d="M6 6.4 C6 3.8 10 3.8 10 6.2 C10 7.8 8 7.6 8 9.6" fill="none" stroke="#c6a837" stroke-width="1.3"/><circle cx="8" cy="11.6" r="0.85" fill="#c6a837"/></svg><div class="u" style="left:366.7px;top:1642px;height:52px;line-height:52px;font-size:26px;color:#cccccc;font-weight:400;letter-spacing:0.345px;">Satisfies @eventually requireme...</div><div style="left:208px;top:1025px;width:596px;height:44px;background:#181818"></div><div style="left:208px;top:1069px;width:596px;height:8px;background:linear-gradient(rgba(0,0,0,.55),rgba(0,0,0,0))"></div><svg style="left:230.0px;top:1031.0px;" width="32" height="32" viewBox="0 0 16 16"><path d="M3.2 5.8 L8 10.6 L12.8 5.8" fill="none" stroke="#cccccc" stroke-width="1.1"/></svg><svg style="left:275.0px;top:1031.0px;" width="32" height="32" viewBox="0 0 16 16"><path d="M1.8 4.6 L8.6 2.2 L14.2 3.8 V11.2 L7.4 13.8 L1.8 12 Z M1.8 4.6 L7.4 6.4 L14.2 3.8 M7.4 6.4 V13.8 M4.8 3.5 L10.6 5.2 V7.4" fill="none" stroke="#df5953" stroke-width="1.1" stroke-linejoin="round"/></svg><div class="u" style="left:319px;top:1021px;height:52px;line-height:52px;font-size:26px;color:#cccccc;font-weight:400;letter-spacing:0.622px;">bridge_demo</div><div class="u" style="left:490px;top:1024.6px;height:46.8px;line-height:46.8px;font-size:23.4px;color:#8f8f8f;font-weight:400;letter-spacing:0.612px;">failed</div><div style="left:784px;top:1410px;width:20px;height:280px;background:#3f3f3f"></div><div style="left:208px;top:1690px;width:596px;height:90px;background:#181818"></div><div style="left:208px;top:1690px;width:596px;height:2px;background:#2b2b2b"></div><div style="left:208px;top:1734px;width:596px;height:2px;background:#2b2b2b"></div><svg style="left:212.0px;top:1697.0px;" width="32" height="32" viewBox="0 0 16 16"><path d="M5.8 3.2 L10.6 8 L5.8 12.8" fill="none" stroke="#cccccc" stroke-width="1.1"/></svg><div class="u" style="left:249px;top:1691px;height:44px;line-height:44px;font-size:22px;color:#cccccc;font-weight:700;letter-spacing:0.29px;-webkit-text-stroke:0.2px;">OUTLINE</div><svg style="left:212.0px;top:1741.0px;" width="32" height="32" viewBox="0 0 16 16"><path d="M5.8 3.2 L10.6 8 L5.8 12.8" fill="none" stroke="#cccccc" stroke-width="1.1"/></svg><div class="u" style="left:249px;top:1735px;height:44px;line-height:44px;font-size:22px;color:#cccccc;font-weight:700;letter-spacing:0.39px;-webkit-text-stroke:0.2px;">TIMELINE</div><div style="left:806px;top:146px;width:933px;height:1634px;background:#1f1f1f"></div><div style="left:805px;top:146px;width:933px;height:68px;background:#181818"></div><div style="left:805px;top:213.5px;width:933px;height:2px;background:#2b2b2b"></div><div style="left:805px;top:146px;width:406px;height:69px;background:#1f1f1f"></div><div style="left:1209px;top:146px;width:2px;height:69px;background:#2b2b2b"></div><svg style="left:830.0px;top:165.0px;" width="32" height="32" viewBox="0 0 16 16"><circle cx="8" cy="8" r="4.6" fill="none" stroke="#6197ba" stroke-width="1.9"/><circle cx="8" cy="8" r="2.2" fill="#6197ba"/><path d="M8 2 V4.6 M8 11.4 V14" stroke="#1f1f1f" stroke-width="0.7"/></svg><div class="u" style="left:872px;top:155px;height:52px;line-height:52px;font-size:26px;color:#9d9d9d;font-weight:400;letter-spacing:0.697px;">TrafficControlImpl.coco</div><svg style="left:1166.0px;top:165.0px;" width="32" height="32" viewBox="0 0 16 16"><path d="M3.6 3.6 L12.4 12.4 M12.4 3.6 L3.6 12.4" fill="none" stroke="#9d9d9d" stroke-width="1.1"/></svg><svg style="left:1676.0px;top:165.0px;" width="32" height="32" viewBox="0 0 16 16"><circle cx="3.5" cy="8" r="1.05" fill="#cccccc"/><circle cx="8" cy="8" r="1.05" fill="#cccccc"/><circle cx="12.5" cy="8" r="1.05" fill="#cccccc"/></svg><div class="u" style="left:808px;top:213px;height:52px;line-height:52px;font-size:26px;color:#a9a9a9;font-weight:400;letter-spacing:0.893px;">fficControlImpl.coco</div><svg style="left:1054.0px;top:223.0px;" width="32" height="32" viewBox="0 0 16 16"><path d="M5.8 3.2 L10.6 8 L5.8 12.8" fill="none" stroke="#a9a9a9" stroke-width="1.1"/></svg><svg style="left:1085.0px;top:222.0px;" width="32" height="32" viewBox="0 0 16 16"><path d="M4.4 1.6 L7.2 4.4 L4.4 7.2 L1.6 4.4 Z M11.6 5.2 L13.8 7.4 L11.6 9.6 L9.4 7.4 Z M11.6 10 L13.8 12.2 L11.6 14.4 L9.4 12.2 Z M5.6 5.8 V12.2 H9.4 M5.6 7.4 H9.4" fill="none" stroke="#e2a144" stroke-width="1.05" stroke-linejoin="round"/></svg><div class="u" style="left:1125px;top:213px;height:52px;line-height:52px;font-size:26px;color:#a9a9a9;font-weight:400;letter-spacing:0.663px;">TrafficControlImpl</div><svg style="left:1342.0px;top:223.0px;" width="32" height="32" viewBox="0 0 16 16"><path d="M5.8 3.2 L10.6 8 L5.8 12.8" fill="none" stroke="#a9a9a9" stroke-width="1.1"/></svg><svg style="left:1374.0px;top:222.0px;" width="32" height="32" viewBox="0 0 16 16"><path d="M4.4 1.6 L7.2 4.4 L4.4 7.2 L1.6 4.4 Z M11.6 5.2 L13.8 7.4 L11.6 9.6 L9.4 7.4 Z M11.6 10 L13.8 12.2 L11.6 14.4 L9.4 12.2 Z M5.6 5.8 V12.2 H9.4 M5.6 7.4 H9.4" fill="none" stroke="#e2a144" stroke-width="1.05" stroke-linejoin="round"/></svg><div class="u" style="left:1412px;top:213px;height:52px;line-height:52px;font-size:26px;color:#a9a9a9;font-weight:400;letter-spacing:0.521px;">&lt;anonymous&gt;</div><svg style="left:1584.0px;top:223.0px;" width="32" height="32" viewBox="0 0 16 16"><path d="M5.8 3.2 L10.6 8 L5.8 12.8" fill="none" stroke="#a9a9a9" stroke-width="1.1"/></svg><svg style="left:1615.0px;top:222.0px;" width="32" height="32" viewBox="0 0 16 16"><path d="M4.4 1.6 L7.2 4.4 L4.4 7.2 L1.6 4.4 Z M11.6 5.2 L13.8 7.4 L11.6 9.6 L9.4 7.4 Z M11.6 10 L13.8 12.2 L11.6 14.4 L9.4 12.2 Z M5.6 5.8 V12.2 H9.4 M5.6 7.4 H9.4" fill="none" stroke="#e2a144" stroke-width="1.05" stroke-linejoin="round"/></svg><div class="u" style="left:1653px;top:213px;height:52px;line-height:52px;font-size:26px;color:#a9a9a9;font-weight:400;letter-spacing:0.6px;width:83.5px;overflow:hidden;">Operational</div><div style="left:938px;top:373px;width:2px;height:36px;background:#404040"></div><div style="left:967px;top:373px;width:2px;height:36px;background:#404040"></div><div style="left:995px;top:373px;width:2px;height:36px;background:#404040"></div><div class="m" style="right:2132px;top:368px;height:48px;line-height:48px;font-size:24px;color:#6e7681">57</div><div class="m" style="left:1025.4px;top:368px;height:48px;line-height:48px;font-size:24px;letter-spacing:0px"><span style="color:#679ad1">state </span><span style="color:#6fbff9">Stopping </span><span style="color:#f9d849">{</span></div><div style="left:938px;top:409px;width:2px;height:36px;background:#404040"></div><div style="left:967px;top:409px;width:2px;height:36px;background:#404040"></div><div style="left:995px;top:409px;width:2px;height:36px;background:#404040"></div><div style="left:1024px;top:409px;width:2px;height:36px;background:#606060"></div><div class="m" style="right:2132px;top:404px;height:48px;line-height:48px;font-size:24px;color:#6e7681">58</div><div class="m" style="left:1054.3px;top:404px;height:48px;line-height:48px;font-size:24px;letter-spacing:0px"><span style="color:#dcdcaf">assert</span><span style="color:#cc76d1">(</span><span style="color:#6fbff9">nextState </span><span style="color:#d4d4d4">!= </span><span style="color:#6fbff9">Stopping</span><span style="color:#cc76d1">)</span></div><div style="left:938px;top:445px;width:2px;height:36px;background:#404040"></div><div style="left:967px;top:445px;width:2px;height:36px;background:#404040"></div><div style="left:995px;top:445px;width:2px;height:36px;background:#404040"></div><div style="left:1024px;top:445px;width:2px;height:36px;background:#606060"></div><div class="m" style="right:2132px;top:440px;height:48px;line-height:48px;font-size:24px;color:#6e7681">59</div><div style="left:938px;top:481px;width:2px;height:36px;background:#404040"></div><div style="left:967px;top:481px;width:2px;height:36px;background:#404040"></div><div style="left:995px;top:481px;width:2px;height:36px;background:#404040"></div><div style="left:1024px;top:481px;width:2px;height:36px;background:#606060"></div><div class="m" style="right:2132px;top:476px;height:48px;line-height:48px;font-size:24px;color:#6e7681">60</div><div class="m" style="left:1054.3px;top:476px;height:48px;line-height:48px;font-size:24px;letter-spacing:0px"><span style="color:#679ad1">state </span><span style="color:#6fbff9">SettingLights </span><span style="color:#cc76d1">{</span></div><div style="left:938px;top:517px;width:2px;height:36px;background:#404040"></div><div style="left:967px;top:517px;width:2px;height:36px;background:#404040"></div><div style="left:995px;top:517px;width:2px;height:36px;background:#404040"></div><div style="left:1024px;top:517px;width:2px;height:36px;background:#606060"></div><div style="left:1053px;top:517px;width:2px;height:36px;background:#404040"></div><div class="m" style="right:2132px;top:512px;height:48px;line-height:48px;font-size:24px;color:#6e7681">61</div><div class="m" style="left:1083.2px;top:512px;height:48px;line-height:48px;font-size:24px;letter-spacing:0px"><span style="color:#6fbff9">lights</span><span style="color:#d4d4d4">.</span><span style="color:#6c69a0">ready</span><span style="color:#4a9df8">()</span><span style="color:#d4d4d4"> = </span><span style="color:#dcdcaf">setNextState</span><span style="color:#4a9df8">(</span><span style="color:#6fbff9">FlashingLights</span><span style="color:#4a9df8">)</span></div><div style="left:938px;top:553px;width:2px;height:36px;background:#404040"></div><div style="left:967px;top:553px;width:2px;height:36px;background:#404040"></div><div style="left:995px;top:553px;width:2px;height:36px;background:#404040"></div><div style="left:1024px;top:553px;width:2px;height:36px;background:#606060"></div><div class="m" style="right:2132px;top:548px;height:48px;line-height:48px;font-size:24px;color:#6e7681">62</div><div class="m" style="left:1054.3px;top:548px;height:48px;line-height:48px;font-size:24px;letter-spacing:0px"><span style="color:#cc76d1">}</span></div><div style="left:938px;top:589px;width:2px;height:36px;background:#404040"></div><div style="left:967px;top:589px;width:2px;height:36px;background:#404040"></div><div style="left:995px;top:589px;width:2px;height:36px;background:#404040"></div><div style="left:1024px;top:589px;width:2px;height:36px;background:#606060"></div><div class="m" style="right:2132px;top:584px;height:48px;line-height:48px;font-size:24px;color:#6e7681">63</div><div style="left:938px;top:626px;width:800px;height:36px;background:#4d4d2e"></div><div style="left:967px;top:625px;width:2px;height:36px;background:#404040"></div><div style="left:995px;top:625px;width:2px;height:36px;background:#404040"></div><div class="m" style="right:2132px;top:620px;height:48px;line-height:48px;font-size:24px;color:#cccccc">64</div><div class="m" style="left:1054.3px;top:620px;height:48px;line-height:48px;font-size:24px;letter-spacing:0px"><span style="color:#679ad1">state </span><span style="color:#6fbff9">FlashingLights </span><span style="color:#cc76d1">{</span></div><svg style="left:809.5px;top:628.0px;" width="32" height="32" viewBox="0 0 16 16"><path d="M2.6 2.4 H9.4 L14 8 L9.4 13.6 H2.6 Z" fill="none" stroke="#f7ce46" stroke-width="1.35" stroke-linejoin="round"/></svg><svg style="left:1021.0px;top:628.0px;" width="32" height="32" viewBox="0 0 16 16"><path d="M2.6 2.4 H9.4 L14 8 L9.4 13.6 H2.6 Z" fill="none" stroke="#f7ce46" stroke-width="1.35" stroke-linejoin="round"/></svg><div style="left:938px;top:769px;width:2px;height:36px;background:#404040"></div><div style="left:967px;top:769px;width:2px;height:36px;background:#404040"></div><div style="left:995px;top:769px;width:2px;height:36px;background:#404040"></div><div style="left:1024px;top:769px;width:2px;height:36px;background:#404040"></div><div style="left:1053px;top:769px;width:2px;height:36px;background:#8a8a8a"></div><div class="m" style="right:2132px;top:764px;height:48px;line-height:48px;font-size:24px;color:#6e7681">65</div><div class="m" style="left:1083.2px;top:764px;height:48px;line-height:48px;font-size:24px;letter-spacing:0px"><span style="color:#dcdcaf">after</span><span style="color:#4a9df8">(</span><span style="color:#6fbff9">kFlashingPeriod</span><span style="color:#4a9df8">)</span><span style="color:#d4d4d4"> = </span><span style="color:#4a9df8">{</span></div><div style="left:938px;top:805px;width:2px;height:36px;background:#404040"></div><div style="left:967px;top:805px;width:2px;height:36px;background:#404040"></div><div style="left:995px;top:805px;width:2px;height:36px;background:#404040"></div><div style="left:1024px;top:805px;width:2px;height:36px;background:#404040"></div><div style="left:1053px;top:805px;width:2px;height:36px;background:#8a8a8a"></div><div style="left:1082px;top:805px;width:2px;height:36px;background:#404040"></div><div class="m" style="right:2132px;top:800px;height:48px;line-height:48px;font-size:24px;color:#6e7681">66</div><div class="m" style="left:1112.1px;top:800px;height:48px;line-height:48px;font-size:24px;letter-spacing:0px"><span style="color:#6fbff9">lights</span><span style="color:#d4d4d4">.</span><span style="color:#dcdcaf">on</span><span style="color:#f9d849">()</span><span style="color:#d4d4d4">;</span></div><div style="left:938px;top:841px;width:2px;height:36px;background:#404040"></div><div style="left:967px;top:841px;width:2px;height:36px;background:#404040"></div><div style="left:995px;top:841px;width:2px;height:36px;background:#404040"></div><div style="left:1024px;top:841px;width:2px;height:36px;background:#404040"></div><div style="left:1053px;top:841px;width:2px;height:36px;background:#8a8a8a"></div><div style="left:1082px;top:841px;width:2px;height:36px;background:#404040"></div><div class="m" style="right:2132px;top:836px;height:48px;line-height:48px;font-size:24px;color:#6e7681">67</div><div class="m" style="left:1112.1px;top:836px;height:48px;line-height:48px;font-size:24px;letter-spacing:0px"><span style="color:#dcdcaf">setNextState</span><span style="color:#f9d849">(</span><span style="color:#6fbff9">SwitchingOnLights</span><span style="color:#f9d849">)</span><span style="color:#d4d4d4">;</span></div><div style="left:938px;top:1381px;width:2px;height:36px;background:#404040"></div><div style="left:967px;top:1381px;width:2px;height:36px;background:#404040"></div><div style="left:995px;top:1381px;width:2px;height:36px;background:#404040"></div><div style="left:1024px;top:1381px;width:2px;height:36px;background:#404040"></div><div class="m" style="right:2132px;top:1376px;height:48px;line-height:48px;font-size:24px;color:#6e7681">82</div><div class="m" style="left:1054.3px;top:1376px;height:48px;line-height:48px;font-size:24px;letter-spacing:0px"><span style="color:#679ad1">state </span><span style="color:#6fbff9">ClosingEntryBarriers </span><span style="color:#cc76d1">{</span></div><div style="left:938px;top:1417px;width:2px;height:36px;background:#404040"></div><div style="left:967px;top:1417px;width:2px;height:36px;background:#404040"></div><div style="left:995px;top:1417px;width:2px;height:36px;background:#404040"></div><div style="left:1024px;top:1417px;width:2px;height:36px;background:#404040"></div><div style="left:1053px;top:1417px;width:2px;height:36px;background:#404040"></div><div class="m" style="right:2132px;top:1412px;height:48px;line-height:48px;font-size:24px;color:#6e7681">83</div><div class="m" style="left:1083.2px;top:1412px;height:48px;line-height:48px;font-size:24px;letter-spacing:0px"><span style="color:#6fbff9">barriers</span><span style="color:#d4d4d4">.</span><span style="color:#6c69a0">ready</span><span style="color:#4a9df8">()</span><span style="color:#d4d4d4"> = </span><span style="color:#4a9df8">{</span></div><div style="left:938px;top:1453px;width:2px;height:36px;background:#404040"></div><div style="left:967px;top:1453px;width:2px;height:36px;background:#404040"></div><div style="left:995px;top:1453px;width:2px;height:36px;background:#404040"></div><div style="left:1024px;top:1453px;width:2px;height:36px;background:#404040"></div><div style="left:1053px;top:1453px;width:2px;height:36px;background:#404040"></div><div style="left:1082px;top:1453px;width:2px;height:36px;background:#404040"></div><div class="m" style="right:2132px;top:1448px;height:48px;line-height:48px;font-size:24px;color:#6e7681">84</div><div class="m" style="left:1112.1px;top:1448px;height:48px;line-height:48px;font-size:24px;letter-spacing:0px"><span style="color:#6fbff9">client</span><span style="color:#d4d4d4">.</span><span style="color:#6c69a0">trafficStopped</span><span style="color:#f9d849">()</span><span style="color:#d4d4d4">;</span></div><div style="left:938px;top:1489px;width:2px;height:36px;background:#404040"></div><div style="left:967px;top:1489px;width:2px;height:36px;background:#404040"></div><div style="left:995px;top:1489px;width:2px;height:36px;background:#404040"></div><div style="left:1024px;top:1489px;width:2px;height:36px;background:#404040"></div><div style="left:1053px;top:1489px;width:2px;height:36px;background:#404040"></div><div style="left:1082px;top:1489px;width:2px;height:36px;background:#404040"></div><div class="m" style="right:2132px;top:1484px;height:48px;line-height:48px;font-size:24px;color:#6e7681">85</div><div class="m" style="left:1112.1px;top:1484px;height:48px;line-height:48px;font-size:24px;letter-spacing:0px"><span style="color:#dcdcaf">setNextState</span><span style="color:#f9d849">(</span><span style="color:#6fbff9">WaitForBridgeClear</span><span style="color:#f9d849">)</span><span style="color:#d4d4d4">;</span></div><div style="left:938px;top:1525px;width:2px;height:36px;background:#404040"></div><div style="left:967px;top:1525px;width:2px;height:36px;background:#404040"></div><div style="left:995px;top:1525px;width:2px;height:36px;background:#404040"></div><div style="left:1024px;top:1525px;width:2px;height:36px;background:#404040"></div><div style="left:1053px;top:1525px;width:2px;height:36px;background:#404040"></div><div class="m" style="right:2132px;top:1520px;height:48px;line-height:48px;font-size:24px;color:#6e7681">86</div><div class="m" style="left:1083.2px;top:1520px;height:48px;line-height:48px;font-size:24px;letter-spacing:0px"><span style="color:#4a9df8">}</span></div><div style="left:938px;top:1561px;width:2px;height:36px;background:#404040"></div><div style="left:967px;top:1561px;width:2px;height:36px;background:#404040"></div><div style="left:995px;top:1561px;width:2px;height:36px;background:#404040"></div><div style="left:1024px;top:1561px;width:2px;height:36px;background:#404040"></div><div class="m" style="right:2132px;top:1556px;height:48px;line-height:48px;font-size:24px;color:#6e7681">87</div><div class="m" style="left:1054.3px;top:1556px;height:48px;line-height:48px;font-size:24px;letter-spacing:0px"><span style="color:#cc76d1">}</span></div><div style="left:938px;top:1597px;width:2px;height:36px;background:#404040"></div><div style="left:967px;top:1597px;width:2px;height:36px;background:#404040"></div><div style="left:995px;top:1597px;width:2px;height:36px;background:#404040"></div><div style="left:1024px;top:1597px;width:2px;height:36px;background:#404040"></div><div class="m" style="right:2132px;top:1592px;height:48px;line-height:48px;font-size:24px;color:#6e7681">88</div><div style="left:938px;top:1633px;width:2px;height:36px;background:#404040"></div><div style="left:967px;top:1633px;width:2px;height:36px;background:#404040"></div><div style="left:995px;top:1633px;width:2px;height:36px;background:#404040"></div><div style="left:1024px;top:1633px;width:2px;height:36px;background:#404040"></div><div class="m" style="right:2132px;top:1628px;height:48px;line-height:48px;font-size:24px;color:#6e7681">89</div><div class="m" style="left:1054.3px;top:1628px;height:48px;line-height:48px;font-size:24px;letter-spacing:0px"><span style="color:#679ad1">state </span><span style="color:#6fbff9">WaitForBridgeClear </span><span style="color:#cc76d1">{</span></div><div style="left:938px;top:1669px;width:2px;height:36px;background:#404040"></div><div style="left:967px;top:1669px;width:2px;height:36px;background:#404040"></div><div style="left:995px;top:1669px;width:2px;height:36px;background:#404040"></div><div style="left:1024px;top:1669px;width:2px;height:36px;background:#404040"></div><div style="left:1053px;top:1669px;width:2px;height:36px;background:#404040"></div><div class="m" style="right:2132px;top:1664px;height:48px;line-height:48px;font-size:24px;color:#6e7681">90</div><div class="m" style="left:1083.2px;top:1664px;height:48px;line-height:48px;font-size:24px;letter-spacing:0px"><span style="color:#6fbff9">client</span><span style="color:#d4d4d4">.</span><span style="color:#dcdcaf">bridgeClear</span><span style="color:#4a9df8">()</span><span style="color:#d4d4d4"> = </span><span style="color:#4a9df8">{</span></div><div style="left:938px;top:1705px;width:2px;height:36px;background:#404040"></div><div style="left:967px;top:1705px;width:2px;height:36px;background:#404040"></div><div style="left:995px;top:1705px;width:2px;height:36px;background:#404040"></div><div style="left:1024px;top:1705px;width:2px;height:36px;background:#404040"></div><div style="left:1053px;top:1705px;width:2px;height:36px;background:#404040"></div><div style="left:1082px;top:1705px;width:2px;height:36px;background:#404040"></div><div class="m" style="right:2132px;top:1700px;height:48px;line-height:48px;font-size:24px;color:#6e7681">91</div><div class="m" style="left:1112.1px;top:1700px;height:48px;line-height:48px;font-size:24px;letter-spacing:0px"><span style="color:#6fbff9">barriers</span><span style="color:#d4d4d4">.</span><span style="color:#dcdcaf">close</span><span style="color:#f9d849">(</span></div><div style="left:938px;top:1741px;width:2px;height:36px;background:#404040"></div><div style="left:967px;top:1741px;width:2px;height:36px;background:#404040"></div><div style="left:995px;top:1741px;width:2px;height:36px;background:#404040"></div><div style="left:1024px;top:1741px;width:2px;height:36px;background:#404040"></div><div style="left:1053px;top:1741px;width:2px;height:36px;background:#404040"></div><div style="left:1082px;top:1741px;width:2px;height:36px;background:#404040"></div><div class="m" style="right:2132px;top:1736px;height:48px;line-height:48px;font-size:24px;color:#6e7681">92</div><div class="m" style="left:1112.1px;top:1736px;height:48px;line-height:48px;font-size:24px;letter-spacing:0px"><span style="color:#dcdcaf">setNextState</span><span style="color:#f9d849">(</span><span style="color:#6fbff9">ClosingExitBarriers</span><span style="color:#f9d849">)</span><span style="color:#d4d4d4">;</span></div><div style="left:1329.85px;top:1710px;width:128px;height:28px;background:#2a2a2a;border-radius:4px"></div><div class="m" style="left:1332.85px;top:1700px;height:48px;line-height:48px;font-size:23px;color:#969696">barriers:</div><div class="m" style="left:1466.85px;top:1700px;height:48px;line-height:48px;font-size:24px;width:272.1500000000001px;overflow:hidden"><span style="color:#71c6b1">BarrierControl</span><span style="color:#d4d4d4">.</span><span style="color:#71c6b1">BarrierKind</span></div><div style="left:805px;top:674px;width:904px;height:72px;background:#3e0f10;border-top:2px solid #a32620;border-bottom:2px solid #a32620;box-sizing:border-box"></div><svg style="left:1042.5px;top:657.0px;" width="24" height="24" viewBox="0 0 16 16"><path d="M0.3 12 L8 4 L15.7 12 Z" fill="#8e241f"/></svg><div class="u" style="left:827px;top:685px;height:52px;line-height:52px;font-size:26px;color:#cccccc;font-weight:700;letter-spacing:-0.572px;-webkit-text-stroke:0.2px;">Exception has occurred.</div><svg style="left:1124.0px;top:696.0px;" width="30" height="30" viewBox="0 0 16 16"><path d="M3.6 3.6 L12.4 12.4 M12.4 3.6 L3.6 12.4" fill="none" stroke="#cccccc" stroke-width="1.1"/></svg><div style="left:806px;top:258px;width:902px;height:110px;background:#1f1f1f"></div><div style="left:808px;top:368px;width:900px;height:7px;background:linear-gradient(rgba(0,0,0,.95),rgba(0,0,0,.5) 45%,rgba(0,0,0,0))"></div><div class="m" style="right:2132px;top:254px;height:48px;line-height:48px;font-size:24px;color:#6e7681">7</div><div class="m" style="left:938.7px;top:254px;height:48px;line-height:48px;font-size:24px;letter-spacing:0px"><span style="color:#679ad1">component </span><span style="color:#71c6b1">TrafficControlImpl </span><span style="color:#f9d849">{</span></div><div class="m" style="left:1408px;top:254px;height:48px;line-height:48px;font-size:24px;color:#df5953">Verification Failed</div><div class="m" style="right:2132px;top:290px;height:48px;line-height:48px;font-size:24px;color:#6e7681">12</div><div class="m" style="left:967.6px;top:290px;height:48px;line-height:48px;font-size:24px;letter-spacing:0px"><span style="color:#679ad1">machine </span><span style="color:#cc76d1">{</span></div><div class="m" style="right:2132px;top:326px;height:48px;line-height:48px;font-size:24px;color:#6e7681">47</div><div class="m" style="left:996.5px;top:326px;height:48px;line-height:48px;font-size:24px;letter-spacing:0px"><span style="color:#679ad1">state </span><span style="color:#6fbff9">Operational </span><span style="color:#4a9df8">{</span></div><div style="left:1709px;top:258px;width:2px;height:1522px;background:#2b2b2b"></div><div style="left:1728px;top:317px;width:10px;height:11px;background:#c72e2e"></div><div style="left:1711px;top:822px;width:27px;height:11px;background:#6f6f45"></div><div style="left:1711px;top:822px;width:27px;height:5px;background:#9a9a7a"></div><div style="left:1740px;top:146px;width:1166px;height:1634px;background:#1f1f1f"></div><div style="left:1739px;top:146px;width:2px;height:1634px;background:#2b2b2b"></div><div style="left:1739px;top:146px;width:1167px;height:68px;background:#181818"></div><div style="left:1739px;top:213.5px;width:1167px;height:2px;background:#2b2b2b"></div><div style="left:1739px;top:146px;width:703px;height:69px;background:#1f1f1f"></div><div style="left:1739px;top:146px;width:703px;height:2px;background:#3477d0"></div><div style="left:2441px;top:146px;width:2px;height:69px;background:#2b2b2b"></div><svg style="left:1755.5px;top:162.0px;" width="37" height="37" viewBox="0 0 16 16"><ellipse cx="8" cy="9.5" rx="4.1" ry="4.8" fill="none" stroke="#6197ba" stroke-width="0.9"/><path d="M5.2 6.1 C5.2 1.5 10.8 1.5 10.8 6.1 M4.6 6.3 H11.4 M3.9 9.4 H1 M12.1 9.4 H15 M4.6 6.5 L2.2 3.9 M11.4 6.5 L13.8 3.9 M5.1 12.8 L2.7 15.2 M10.9 12.8 L13.3 15.2 M6.5 8 L9.5 11.2 M9.5 8 L6.5 11.2" fill="none" stroke="#6197ba" stroke-width="0.9"/></svg><div class="u" style="left:1803px;top:155px;height:52px;line-height:52px;font-size:26px;color:#ffffff;font-weight:400;letter-spacing:0.573px;">TrafficControlImpl: Illegal signal counterexample</div><svg style="left:2397.0px;top:165.0px;" width="32" height="32" viewBox="0 0 16 16"><path d="M3.6 3.6 L12.4 12.4 M12.4 3.6 L3.6 12.4" fill="none" stroke="#ffffff" stroke-width="1.1"/></svg><svg style="left:2793.0px;top:165.0px;" width="32" height="32" viewBox="0 0 16 16"><rect x="1.8" y="2.3" width="12.4" height="11.4" rx="1" fill="none" stroke="#cccccc" stroke-width="1.1"/><path d="M8 2.5 V13.5" fill="none" stroke="#cccccc" stroke-width="1.1"/></svg><svg style="left:2844.0px;top:165.0px;" width="32" height="32" viewBox="0 0 16 16"><circle cx="3.5" cy="8" r="1.05" fill="#cccccc"/><circle cx="8" cy="8" r="1.05" fill="#cccccc"/><circle cx="12.5" cy="8" r="1.05" fill="#cccccc"/></svg><svg style="left:1754.0px;top:226.0px;" width="32" height="32" viewBox="0 0 16 16"><circle cx="6.8" cy="6.6" r="5.15" fill="none" stroke="#cccccc" stroke-width="1.15"/><path d="M10.45 10.25 L14.7 14.6 M4.3 6.6 H9.3 M6.8 4.1 V9.1" fill="none" stroke="#cccccc" stroke-width="1.15"/></svg><svg style="left:1798.3px;top:226.0px;" width="32" height="32" viewBox="0 0 16 16"><circle cx="6.8" cy="6.6" r="5.15" fill="none" stroke="#cccccc" stroke-width="1.15"/><path d="M10.45 10.25 L14.7 14.6 M4.3 6.6 H9.3" fill="none" stroke="#cccccc" stroke-width="1.15"/></svg><svg style="left:1842.0px;top:226.0px;" width="32" height="32" viewBox="0 0 16 16"><path d="M1.5 5.2 V2.4 H4.8 M11.2 2.4 H14.5 V5.2 M14.5 10.8 V13.6 H11.2 M4.8 13.6 H1.5 V10.8" fill="none" stroke="#cccccc" stroke-width="0.95"/><rect x="3.95" y="5.15" width="8.1" height="5.7" fill="none" stroke="#cccccc" stroke-width="1.7"/></svg><svg style="left:1886.0px;top:226.0px;" width="32" height="32" viewBox="0 0 16 16"><path d="M0.95 3.65 H3.65 V0.95 M12.35 0.95 V3.65 H15.05 M15.05 12.35 H12.35 V15.05 M3.65 15.05 V12.35 H0.95" fill="none" stroke="#cccccc" stroke-width="0.95"/><rect x="4.85" y="5.8" width="6.3" height="4.4" rx="0.4" fill="none" stroke="#cccccc" stroke-width="1.6"/></svg><svg style="left:1930.0px;top:226.0px;" width="32" height="32" viewBox="0 0 16 16"><path d="M1.35 1.5 H12.9 L14.65 3.25 V14.5 H1.35 Z" fill="none" stroke="#cccccc" stroke-width="1.15" stroke-linejoin="round"/><path d="M4.15 1.8 H10.55 V5.65 H4.15 Z" fill="#cccccc"/><rect x="8.2" y="2.3" width="1.7" height="2.35" fill="#1f1f1f"/></svg><svg style="left:1974.0px;top:226.0px;" width="32" height="32" viewBox="0 0 16 16"><path d="M5.25 3 V13 M10.75 3 V13" fill="none" stroke="#cccccc" stroke-width="1.75"/></svg><svg style="left:2018.0px;top:226.0px;" width="32" height="32" viewBox="0 0 16 16"><path d="M4.85 3.67 A5.35 5.35 0 1 1 2.73 7.07 M2.3 3.5 H5.2 V6.4" fill="none" stroke="#6a6a6a" stroke-width="1.1"/></svg><div style="left:2719px;top:220px;width:177px;height:44px;background:#1f1f1f;border:2px solid #3a3a3a;border-radius:8px;box-sizing:border-box"></div><div style="left:2732.5px;top:234px;width:16px;height:16px;background:#85c797;border-radius:50%"></div><div class="u" style="left:2758px;top:217px;height:52px;line-height:52px;font-size:26px;color:#cccccc;font-weight:400;letter-spacing:0.592px;">Up to date</div><svg style="left:0;top:0" width="2906" height="1780" viewBox="0 0 2906 1780"><path d="M1827.2 304 V1600" stroke="#4a4a4e" stroke-width="2" stroke-dasharray="11.6 11.65" stroke-dashoffset="2.25" fill="none"/><path d="M2171 304 V1600" stroke="#c6c6c6" stroke-width="2" stroke-dasharray="11.6 11.65" stroke-dashoffset="2.25" fill="none"/><path d="M2515 304 V1600" stroke="#c6c6c6" stroke-width="2" stroke-dasharray="11.6 11.65" stroke-dashoffset="2.25" fill="none"/><path d="M2859 304 V1600" stroke="#c6c6c6" stroke-width="2" stroke-dasharray="11.6 11.65" stroke-dashoffset="2.25" fill="none"/><rect x="1814.2" y="363.3" width="26" height="607.8999999999999" fill="#3a3b40"/><rect x="1814.2" y="1222.6" width="26" height="277.39999999999986" fill="#3a3b40"/><rect x="2158" y="363.3" width="26" height="607.8999999999999" fill="#2e4b73"/><rect x="2158" y="1024.3" width="26" height="145.19999999999982" fill="#2e4b73"/><rect x="2158" y="1222.6" width="26" height="277.39999999999986" fill="#2e4b73"/><rect x="2158" y="1553.1" width="26" height="39.200000000000045" fill="#2e4b73"/><rect x="2846" y="429.40000000000003" width="26" height="211.2999999999999" fill="#2e4b73"/><rect x="2502" y="693.8" width="26" height="211.29999999999995" fill="#2e4b73"/><rect x="2502" y="1288.6999999999998" width="26" height="145.20000000000005" fill="#2e4b73"/><path d="M1814.2 402.7 H1840.2" stroke="rgba(255,255,255,0.07)" stroke-width="1.2"/><path d="M1814.2 468.8 H1840.2" stroke="rgba(255,255,255,0.07)" stroke-width="1.2"/><path d="M1814.2 534.9 H1840.2" stroke="rgba(255,255,255,0.07)" stroke-width="1.2"/><path d="M1814.2 601.0 H1840.2" stroke="rgba(255,255,255,0.07)" stroke-width="1.2"/><path d="M1814.2 667.1 H1840.2" stroke="rgba(255,255,255,0.07)" stroke-width="1.2"/><path d="M1814.2 733.2 H1840.2" stroke="rgba(255,255,255,0.07)" stroke-width="1.2"/><path d="M1814.2 799.3 H1840.2" stroke="rgba(255,255,255,0.07)" stroke-width="1.2"/><path d="M1814.2 865.4 H1840.2" stroke="rgba(255,255,255,0.07)" stroke-width="1.2"/><path d="M1814.2 931.5 H1840.2" stroke="rgba(255,255,255,0.07)" stroke-width="1.2"/><path d="M1814.2 1262.0 H1840.2" stroke="rgba(255,255,255,0.07)" stroke-width="1.2"/><path d="M1814.2 1328.1 H1840.2" stroke="rgba(255,255,255,0.07)" stroke-width="1.2"/><path d="M1814.2 1394.2 H1840.2" stroke="rgba(255,255,255,0.07)" stroke-width="1.2"/><path d="M1814.2 1460.3 H1840.2" stroke="rgba(255,255,255,0.07)" stroke-width="1.2"/><path d="M2158 402.7 H2184" stroke="rgba(255,255,255,0.07)" stroke-width="1.2"/><path d="M2158 468.8 H2184" stroke="rgba(255,255,255,0.07)" stroke-width="1.2"/><path d="M2158 534.9 H2184" stroke="rgba(255,255,255,0.07)" stroke-width="1.2"/><path d="M2158 601.0 H2184" stroke="rgba(255,255,255,0.07)" stroke-width="1.2"/><path d="M2158 667.1 H2184" stroke="rgba(255,255,255,0.07)" stroke-width="1.2"/><path d="M2158 733.2 H2184" stroke="rgba(255,255,255,0.07)" stroke-width="1.2"/><path d="M2158 799.3 H2184" stroke="rgba(255,255,255,0.07)" stroke-width="1.2"/><path d="M2158 865.4 H2184" stroke="rgba(255,255,255,0.07)" stroke-width="1.2"/><path d="M2158 931.5 H2184" stroke="rgba(255,255,255,0.07)" stroke-width="1.2"/><path d="M2158 1063.7 H2184" stroke="rgba(255,255,255,0.07)" stroke-width="1.2"/><path d="M2158 1129.8 H2184" stroke="rgba(255,255,255,0.07)" stroke-width="1.2"/><path d="M2158 1262.0 H2184" stroke="rgba(255,255,255,0.07)" stroke-width="1.2"/><path d="M2158 1328.1 H2184" stroke="rgba(255,255,255,0.07)" stroke-width="1.2"/><path d="M2158 1394.2 H2184" stroke="rgba(255,255,255,0.07)" stroke-width="1.2"/><path d="M2158 1460.3 H2184" stroke="rgba(255,255,255,0.07)" stroke-width="1.2"/><path d="M2846 468.8 H2872" stroke="rgba(255,255,255,0.07)" stroke-width="1.2"/><path d="M2846 534.9 H2872" stroke="rgba(255,255,255,0.07)" stroke-width="1.2"/><path d="M2846 601.0 H2872" stroke="rgba(255,255,255,0.07)" stroke-width="1.2"/><path d="M2502 733.2 H2528" stroke="rgba(255,255,255,0.07)" stroke-width="1.2"/><path d="M2502 799.3 H2528" stroke="rgba(255,255,255,0.07)" stroke-width="1.2"/><path d="M2502 865.4 H2528" stroke="rgba(255,255,255,0.07)" stroke-width="1.2"/><path d="M2502 1328.1 H2528" stroke="rgba(255,255,255,0.07)" stroke-width="1.2"/><path d="M2502 1394.2 H2528" stroke="rgba(255,255,255,0.07)" stroke-width="1.2"/><circle cx="2171" cy="336.6" r="6.9" fill="#ad82d5"/><circle cx="2171" cy="402.7" r="6.9" fill="#ad82d5"/><circle cx="2171" cy="468.8" r="6.9" fill="#ad82d5"/><circle cx="2171" cy="601.0" r="6.9" fill="#ad82d5"/><circle cx="2171" cy="667.1" r="6.9" fill="#ad82d5"/><circle cx="2171" cy="733.2" r="6.9" fill="#ad82d5"/><circle cx="2171" cy="865.4" r="6.9" fill="#ad82d5"/><circle cx="2171" cy="931.5" r="6.9" fill="#ad82d5"/><circle cx="2171" cy="997.6" r="6.9" fill="#ad82d5"/><circle cx="2171" cy="1063.7" r="6.9" fill="#ad82d5"/><circle cx="2171" cy="1129.8" r="6.9" fill="#ad82d5"/><circle cx="2171" cy="1195.9" r="6.9" fill="#ad82d5"/><circle cx="2171" cy="1262.0" r="6.9" fill="#ad82d5"/><circle cx="2171" cy="1328.1" r="6.9" fill="#ad82d5"/><circle cx="2171" cy="1394.2" r="6.9" fill="#ad82d5"/><circle cx="2171" cy="1460.3" r="6.9" fill="#ad82d5"/><circle cx="2171" cy="1526.4" r="8" fill="#5b94d6"/><circle cx="2515" cy="336.6" r="6.9" fill="#ad82d5"/><circle cx="2515" cy="733.2" r="6.9" fill="#ad82d5"/><circle cx="2515" cy="799.3" r="6.9" fill="#ad82d5"/><circle cx="2515" cy="865.4" r="6.9" fill="#ad82d5"/><circle cx="2515" cy="931.5" r="6.9" fill="#ad82d5"/><circle cx="2515" cy="1328.1" r="6.9" fill="#ad82d5"/><circle cx="2515" cy="1394.2" r="6.9" fill="#ad82d5"/><circle cx="2515" cy="1460.3" r="6.9" fill="#ad82d5"/><circle cx="2859" cy="336.6" r="6.9" fill="#ad82d5"/><circle cx="2859" cy="468.8" r="6.9" fill="#ad82d5"/><circle cx="2859" cy="534.9" r="6.9" fill="#ad82d5"/><circle cx="2859" cy="601.0" r="6.9" fill="#ad82d5"/><circle cx="2859" cy="667.1" r="6.9" fill="#ad82d5"/><path d="M1840.2 369.5 H2150" stroke="#c6c6c6" stroke-width="2" fill="none"/><path d="M2158 369.5 L2147.3 364.5 V374.5 Z" fill="#d2d2d2"/><path d="M2184 435.6 H2838" stroke="#c6c6c6" stroke-width="2" fill="none"/><path d="M2846 435.6 L2835.3 430.6 V440.6 Z" fill="#d2d2d2"/><path d="M2872 501.7 H2889.5 V518.7 H2880" stroke="#c6c6c6" stroke-width="2" fill="none"/><path d="M2872 518.7 L2882.7 513.7 V523.7 Z" fill="#d0d0d0"/><path d="M2846 567.8 H2192" stroke="#c6c6c6" stroke-width="2" fill="none"/><path d="M2184 567.8 L2194.7 562.8 V572.8 Z" fill="#d2d2d2"/><path d="M2846 633.9 H2192" stroke="#c6c6c6" stroke-width="2" fill="none"/><path d="M2184 633.9 L2194.7 628.9 V638.9 Z" fill="#d2d2d2"/><path d="M2184 700.0 H2494" stroke="#c6c6c6" stroke-width="2" fill="none"/><path d="M2502 700.0 L2491.3 695.0 V705.0 Z" fill="#d2d2d2"/><path d="M2528 766.0999999999999 H2545.5 V783.0999999999999 H2536" stroke="#c6c6c6" stroke-width="2" fill="none"/><path d="M2528 783.0999999999999 L2538.7 778.0999999999999 V788.0999999999999 Z" fill="#d0d0d0"/><path d="M2502 832.1999999999999 H2192" stroke="#c6c6c6" stroke-width="2" fill="none"/><path d="M2184 832.1999999999999 L2194.7 827.1999999999999 V837.1999999999999 Z" fill="#d2d2d2"/><path d="M2502 898.3 H2192" stroke="#c6c6c6" stroke-width="2" fill="none"/><path d="M2184 898.3 L2194.7 893.3 V903.3 Z" fill="#d2d2d2"/><path d="M2158 964.4 H1848.2" stroke="#c6c6c6" stroke-width="2" fill="none"/><path d="M1840.2 964.4 L1850.9 959.4 V969.4 Z" fill="#d2d2d2"/><path d="M2184 1030.5 H2201.5 V1047.5 H2192" stroke="#c6c6c6" stroke-width="2" fill="none"/><path d="M2184 1047.5 L2194.7 1042.5 V1052.5 Z" fill="#d0d0d0"/><path d="M2184 1096.6 H2201.5 V1113.6 H2192" stroke="#c6c6c6" stroke-width="2" fill="none"/><path d="M2184 1113.6 L2194.7 1108.6 V1118.6 Z" fill="#d0d0d0"/><path d="M2158 1162.6999999999998 H1835.2" stroke="#c6c6c6" stroke-width="2" fill="none"/><path d="M1827.2 1162.6999999999998 L1837.9 1157.6999999999998 V1167.6999999999998 Z" fill="#d2d2d2"/><path d="M1840.2 1228.8 H2150" stroke="#c6c6c6" stroke-width="2" fill="none"/><path d="M2158 1228.8 L2147.3 1223.8 V1233.8 Z" fill="#d2d2d2"/><path d="M2184 1294.8999999999999 H2494" stroke="#c6c6c6" stroke-width="2" fill="none"/><path d="M2502 1294.8999999999999 L2491.3 1289.8999999999999 V1299.8999999999999 Z" fill="#d2d2d2"/><path d="M2502 1361.0 H2192" stroke="#c6c6c6" stroke-width="2" fill="none"/><path d="M2184 1361.0 L2194.7 1356.0 V1366.0 Z" fill="#d2d2d2"/><path d="M2502 1427.1 H2192" stroke="#c6c6c6" stroke-width="2" fill="none"/><path d="M2184 1427.1 L2194.7 1422.1 V1432.1 Z" fill="#d2d2d2"/><path d="M2158 1493.1999999999998 H1848.2" stroke="#c6c6c6" stroke-width="2" fill="none"/><path d="M1840.2 1493.1999999999998 L1850.9 1488.1999999999998 V1498.1999999999998 Z" fill="#d2d2d2"/><path d="M2184 1559.3 H2201.5 V1576.3 H2192" stroke="#e25b52" stroke-width="2" fill="none"/><path d="M2184 1576.3 L2194.7 1571.3 V1581.3 Z" fill="#e25b52"/></svg><div class="u" style="left:1951.6px;top:332.1px;height:44px;line-height:44px;font-size:22px;color:#ad82d5;font-weight:400;letter-spacing:0.19px;">initialise()</div><div class="u" style="left:2467.5px;top:398.20000000000005px;height:44px;line-height:44px;font-size:22px;color:#ad82d5;font-weight:400;letter-spacing:0.19px;">initialise()</div><div class="u" style="left:2890.5px;top:465.09999999999997px;height:44px;line-height:44px;font-size:22px;color:#ad82d5;font-weight:400;letter-spacing:0.347px;width:15.5px;overflow:hidden">[nondet ] SyncInitOk</div><div class="u" style="left:2409.0px;top:530.4px;height:44px;line-height:44px;font-size:22px;color:#ad82d5;font-weight:400;letter-spacing:0.298px;">(queued): initialised()</div><div class="u" style="left:2470.8px;top:596.5px;height:44px;line-height:44px;font-size:22px;color:#ad82d5;font-weight:400;letter-spacing:0.323px;">return nil</div><div class="u" style="left:2295.5px;top:662.6px;height:44px;line-height:44px;font-size:22px;color:#ad82d5;font-weight:400;letter-spacing:0.19px;">initialise()</div><div class="u" style="left:2546.5px;top:729.4999999999999px;height:44px;line-height:44px;font-size:22px;color:#ad82d5;font-weight:400;letter-spacing:0.347px;">[nondet ] SyncInitOk</div><div class="u" style="left:2237.0px;top:794.8px;height:44px;line-height:44px;font-size:22px;color:#ad82d5;font-weight:400;letter-spacing:0.298px;">(queued): initialised()</div><div class="u" style="left:2298.8px;top:860.9px;height:44px;line-height:44px;font-size:22px;color:#ad82d5;font-weight:400;letter-spacing:0.323px;">return nil</div><div class="u" style="left:1954.8px;top:927.0px;height:44px;line-height:44px;font-size:22px;color:#ad82d5;font-weight:400;letter-spacing:0.323px;">return nil</div><div class="u" style="left:2202.5px;top:993.9px;height:44px;line-height:44px;font-size:22px;color:#ad82d5;font-weight:400;letter-spacing:0.295px;">(dequeued): initialised()</div><div class="u" style="left:2202.5px;top:1060.0px;height:44px;line-height:44px;font-size:22px;color:#ad82d5;font-weight:400;letter-spacing:0.295px;">(dequeued): initialised()</div><div class="u" style="left:1944.6px;top:1125.2999999999997px;height:44px;line-height:44px;font-size:22px;color:#ad82d5;font-weight:400;letter-spacing:0.321px;">initialised()</div><div class="u" style="left:1938.6px;top:1191.3999999999999px;height:44px;line-height:44px;font-size:22px;color:#ad82d5;font-weight:400;letter-spacing:0.405px;">stopTraffic()</div><div class="u" style="left:2281.5px;top:1257.4999999999998px;height:44px;line-height:44px;font-size:22px;color:#ad82d5;font-weight:400;letter-spacing:0.288px;">flashingOn()</div><div class="u" style="left:2256.0px;top:1323.6px;height:44px;line-height:44px;font-size:22px;color:#ad82d5;font-weight:400;letter-spacing:0.251px;">(queued): ready()</div><div class="u" style="left:2298.8px;top:1389.6999999999998px;height:44px;line-height:44px;font-size:22px;color:#ad82d5;font-weight:400;letter-spacing:0.323px;">return nil</div><div class="u" style="left:1954.8px;top:1455.7999999999997px;height:44px;line-height:44px;font-size:22px;color:#ad82d5;font-weight:400;letter-spacing:0.323px;">return nil</div><div class="u" style="left:2202.5px;top:1522.7px;height:44px;line-height:44px;font-size:22px;color:#e25b52;font-weight:400;letter-spacing:0.253px;">(dequeued): ready()</div><div style="left:1794px;top:265px;width:67px;height:39px;background:#373a41;border:2px solid #2b4c80;border-radius:5px;box-sizing:border-box"></div><div class="u" style="left:1804.2px;top:261px;height:44px;line-height:44px;font-size:22px;color:#cccccc;font-weight:400;letter-spacing:-0.15px;">User</div><div style="left:2068px;top:265px;width:206px;height:39px;background:#2d2d2d;border:2px solid #353535;border-radius:5px;box-sizing:border-box"></div><div class="u" style="left:2081.7px;top:261px;height:44px;line-height:44px;font-size:22px;color:#cccccc;font-weight:400;letter-spacing:0.366px;">TrafficControlImpl</div><div style="left:2477px;top:265px;width:76px;height:39px;background:#2d2d2d;border:2px solid #353535;border-radius:5px;box-sizing:border-box"></div><div class="u" style="left:2488.25px;top:261px;height:44px;line-height:44px;font-size:22px;color:#cccccc;font-weight:400;letter-spacing:0.428px;">lights</div><div style="left:2809px;top:265px;width:111px;height:39px;background:#2d2d2d;border:2px solid #353535;border-radius:5px;box-sizing:border-box"></div><div class="u" style="left:2820.5px;top:261px;height:44px;line-height:44px;font-size:22px;color:#cccccc;font-weight:400;letter-spacing:0.346px;">barriers</div><div class="u" style="left:1751.5px;top:1627px;height:44px;line-height:44px;font-size:22px;color:#e25b52;font-weight:400;letter-spacing:0.275px;">The last signal was illegal; it could not be handled by TrafficControlImpl because no transition matched.</div><div style="left:734px;top:867px;width:1035px;height:516px;background:#202020;border:2px solid #454545;border-radius:7px;box-sizing:border-box;box-shadow:0 2px 8px rgba(0,0,0,.3)"></div><div style="left:752px;top:886px;width:325px;height:34px;background:#2f2f2f;border-radius:6px"></div><div class="m" style="left:763.5px;top:875px;height:56px;line-height:56px;font-size:27.8px;color:#cccccc">TrafficControlImpl</div><div class="u" style="left:1079px;top:875px;height:56px;line-height:56px;font-size:28px;color:#cccccc;font-weight:700;letter-spacing:0.407px;-webkit-text-stroke:0.2px;">: Uses its required ports correctly</div><div style="left:736px;top:935px;width:1031px;height:2px;background:#3c3c3c"></div><svg style="left:751.5px;top:953.0px;" width="24" height="24" viewBox="0 0 16 16"><circle cx="8" cy="8" r="6.6" fill="none" stroke="#df5953" stroke-width="1.1"/><path d="M5.4 5.4 L10.6 10.6 M10.6 5.4 L5.4 10.6" fill="none" stroke="#df5953" stroke-width="1.1"/></svg><div class="u" style="left:783px;top:939px;height:52px;line-height:52px;font-size:26px;color:#cccccc;font-weight:400;letter-spacing:-1.003px;">Failed</div><div style="left:736px;top:999px;width:1031px;height:2px;background:#3c3c3c"></div><div style="left:770px;top:1025.5px;width:8px;height:8px;background:#cccccc;border-radius:50%"></div><div class="u" style="left:792.4px;top:1002.5px;height:52px;line-height:52px;font-size:26px;color:#cccccc;font-weight:700;letter-spacing:-0.415px;-webkit-text-stroke:0.2px;">Preparation Time</div><div class="u" style="left:999.0999999999999px;top:1002.5px;height:52px;line-height:52px;font-size:26px;color:#cccccc;font-weight:400;letter-spacing:-0.217px;">: 0.26 seconds</div><div style="left:770px;top:1063.5px;width:8px;height:8px;background:#cccccc;border-radius:50%"></div><div class="u" style="left:792.4px;top:1040.5px;height:52px;line-height:52px;font-size:26px;color:#cccccc;font-weight:700;letter-spacing:-0.63px;-webkit-text-stroke:0.2px;">Execution Time</div><div class="u" style="left:976.9px;top:1040.5px;height:52px;line-height:52px;font-size:26px;color:#cccccc;font-weight:400;letter-spacing:-0.278px;">: 0.00 seconds</div><div style="left:770px;top:1101.5px;width:8px;height:8px;background:#cccccc;border-radius:50%"></div><div class="u" style="left:792.4px;top:1078.5px;height:52px;line-height:52px;font-size:26px;color:#cccccc;font-weight:700;letter-spacing:-0.349px;-webkit-text-stroke:0.2px;">States</div><div class="u" style="left:869.6999999999999px;top:1078.5px;height:52px;line-height:52px;font-size:26px;color:#cccccc;font-weight:400;letter-spacing:0.093px;">: 224</div><div style="left:770px;top:1139.5px;width:8px;height:8px;background:#cccccc;border-radius:50%"></div><div class="u" style="left:792.4px;top:1116.5px;height:52px;line-height:52px;font-size:26px;color:#cccccc;font-weight:700;letter-spacing:-0.47px;-webkit-text-stroke:0.2px;">Transitions</div><div class="u" style="left:927.4px;top:1116.5px;height:52px;line-height:52px;font-size:26px;color:#cccccc;font-weight:400;letter-spacing:-1.157px;">: 317</div><div style="left:770px;top:1177.5px;width:8px;height:8px;background:#cccccc;border-radius:50%"></div><div class="u" style="left:792.4px;top:1154.5px;height:52px;line-height:52px;font-size:26px;color:#cccccc;font-weight:700;letter-spacing:-0.54px;-webkit-text-stroke:0.2px;">Memory</div><div class="u" style="left:890.4px;top:1154.5px;height:52px;line-height:52px;font-size:26px;color:#cccccc;font-weight:400;letter-spacing:-0.325px;">: 272.00MiB</div><div style="left:770px;top:1215.5px;width:8px;height:8px;background:#cccccc;border-radius:50%"></div><div class="u" style="left:792.4px;top:1192.5px;height:52px;line-height:52px;font-size:26px;color:#cccccc;font-weight:700;letter-spacing:-0.74px;-webkit-text-stroke:0.2px;">Depth</div><div class="u" style="left:864.1px;top:1192.5px;height:52px;line-height:52px;font-size:26px;color:#cccccc;font-weight:400;letter-spacing:0.044px;">: 22</div><div style="left:736px;top:1253px;width:1031px;height:2px;background:#3c3c3c"></div><div class="u" style="left:752px;top:1256.5px;height:52px;line-height:52px;font-size:26px;color:#cccccc;font-weight:400;letter-spacing:-0.166px;">The component does not make any calls that are not permitted by the required ports,</div><div class="u" style="left:752px;top:1294.5px;height:52px;line-height:52px;font-size:26px;color:#cccccc;font-weight:400;letter-spacing:-0.137px;">and it does not receive any return values or signals from the required ports that it</div><div class="u" style="left:752px;top:1332.5px;height:52px;line-height:52px;font-size:26px;color:#cccccc;font-weight:400;letter-spacing:-0.353px;">cannot handle.</div><div style="left:112px;top:1778.2px;width:2794px;height:1.6px;background:#2b2b2b"></div></div></div></body></html>
